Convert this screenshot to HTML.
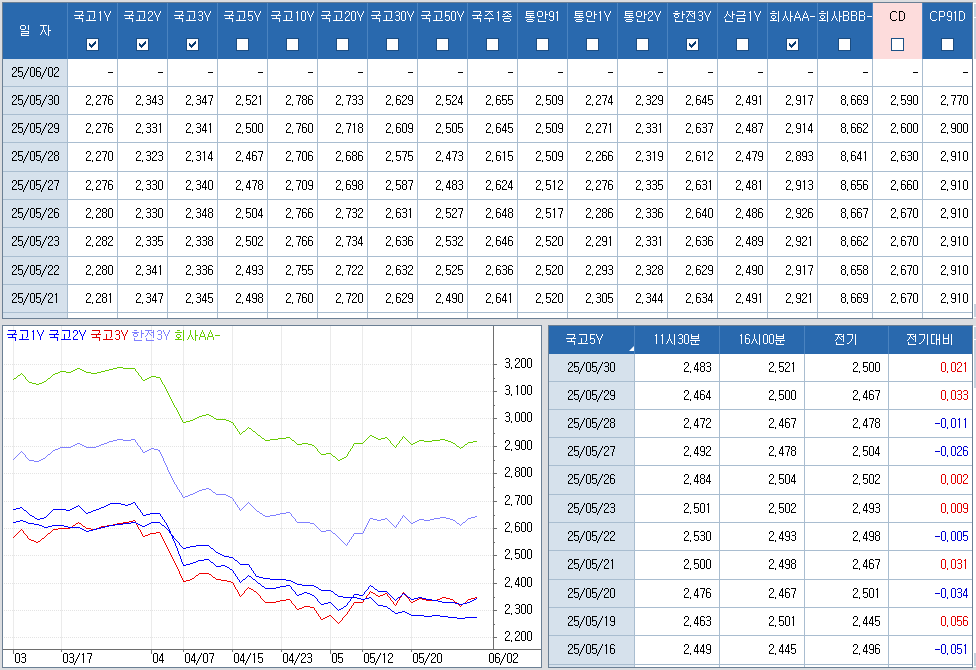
<!DOCTYPE html><html><head><meta charset="utf-8"><style>
html,body{margin:0;padding:0}
body{width:976px;height:670px;overflow:hidden;position:relative;background:#dcdde0;font-family:"Liberation Sans", sans-serif;font-size:13px;color:#000}
div{position:absolute;box-sizing:border-box}
.t{white-space:nowrap;line-height:14px;height:14px}
.n{white-space:nowrap;line-height:14px;height:14px;font-size:14px;text-align:right}
.nc{white-space:nowrap;line-height:14px;height:14px;font-size:14px;text-align:center}
.c{text-align:center}
.hl{height:1px;background:#a9bdd0}
.vl{width:1px;background:#a9bdd0}
.dash{height:1px;width:5px;background:#000}
.k{white-space:nowrap;line-height:14px;height:14px;font-size:12px}
.cb{width:13px;height:13px;border:1px solid #1b4c80;background:#fff}

</style></head><body>
<div style="left:2px;top:2px;width:971px;height:317px;border:1px solid #6b7f94;border-right:none;background:#fff"></div>
<div style="left:3px;top:3px;width:969px;height:56px;background:#2969ae"></div>
<div style="left:3px;top:59px;width:64px;height:259px;background:#d6e1ec"></div>
<div style="left:873px;top:3px;width:49px;height:56px;background:#fddcdc"></div>
<div style="left:67px;top:3px;width:1px;height:56px;background:#4a83c0"></div>
<div class="vl" style="left:67px;top:59px;height:259px"></div>
<div style="left:117px;top:3px;width:1px;height:56px;background:#4a83c0"></div>
<div class="vl" style="left:117px;top:59px;height:259px"></div>
<div style="left:167px;top:3px;width:1px;height:56px;background:#4a83c0"></div>
<div class="vl" style="left:167px;top:59px;height:259px"></div>
<div style="left:217px;top:3px;width:1px;height:56px;background:#4a83c0"></div>
<div class="vl" style="left:217px;top:59px;height:259px"></div>
<div style="left:267px;top:3px;width:1px;height:56px;background:#4a83c0"></div>
<div class="vl" style="left:267px;top:59px;height:259px"></div>
<div style="left:317px;top:3px;width:1px;height:56px;background:#4a83c0"></div>
<div class="vl" style="left:317px;top:59px;height:259px"></div>
<div style="left:367px;top:3px;width:1px;height:56px;background:#4a83c0"></div>
<div class="vl" style="left:367px;top:59px;height:259px"></div>
<div style="left:417px;top:3px;width:1px;height:56px;background:#4a83c0"></div>
<div class="vl" style="left:417px;top:59px;height:259px"></div>
<div style="left:467px;top:3px;width:1px;height:56px;background:#4a83c0"></div>
<div class="vl" style="left:467px;top:59px;height:259px"></div>
<div style="left:517px;top:3px;width:1px;height:56px;background:#4a83c0"></div>
<div class="vl" style="left:517px;top:59px;height:259px"></div>
<div style="left:567px;top:3px;width:1px;height:56px;background:#4a83c0"></div>
<div class="vl" style="left:567px;top:59px;height:259px"></div>
<div style="left:617px;top:3px;width:1px;height:56px;background:#4a83c0"></div>
<div class="vl" style="left:617px;top:59px;height:259px"></div>
<div style="left:667px;top:3px;width:1px;height:56px;background:#4a83c0"></div>
<div class="vl" style="left:667px;top:59px;height:259px"></div>
<div style="left:717px;top:3px;width:1px;height:56px;background:#4a83c0"></div>
<div class="vl" style="left:717px;top:59px;height:259px"></div>
<div style="left:767px;top:3px;width:1px;height:56px;background:#4a83c0"></div>
<div class="vl" style="left:767px;top:59px;height:259px"></div>
<div style="left:817px;top:3px;width:1px;height:56px;background:#4a83c0"></div>
<div class="vl" style="left:817px;top:59px;height:259px"></div>
<div style="left:872px;top:3px;width:1px;height:56px;background:#4a83c0"></div>
<div class="vl" style="left:872px;top:59px;height:259px"></div>
<div style="left:922px;top:3px;width:1px;height:56px;background:#4a83c0"></div>
<div class="vl" style="left:922px;top:59px;height:259px"></div>
<div class="hl" style="left:3px;top:86px;width:969px"></div>
<div class="hl" style="left:3px;top:114px;width:969px"></div>
<div class="hl" style="left:3px;top:142px;width:969px"></div>
<div class="hl" style="left:3px;top:171px;width:969px"></div>
<div class="hl" style="left:3px;top:199px;width:969px"></div>
<div class="hl" style="left:3px;top:227px;width:969px"></div>
<div class="hl" style="left:3px;top:256px;width:969px"></div>
<div class="hl" style="left:3px;top:284px;width:969px"></div>
<div class="hl" style="left:3px;top:312px;width:969px"></div>
<div class="cb" style="left:86px;top:38px;"></div>
<svg style="position:absolute;left:86px;top:38px" width="13" height="13" shape-rendering="crispEdges"><path d="M3 5h1v3h-1zM4 6h1v3h-1zM5 7h1v3h-1zM6 6h1v3h-1zM7 5h1v3h-1zM8 4h1v3h-1zM9 3h1v3h-1z" fill="#0b3b70"/></svg>
<div class="cb" style="left:136px;top:38px;"></div>
<svg style="position:absolute;left:136px;top:38px" width="13" height="13" shape-rendering="crispEdges"><path d="M3 5h1v3h-1zM4 6h1v3h-1zM5 7h1v3h-1zM6 6h1v3h-1zM7 5h1v3h-1zM8 4h1v3h-1zM9 3h1v3h-1z" fill="#0b3b70"/></svg>
<div class="cb" style="left:186px;top:38px;"></div>
<svg style="position:absolute;left:186px;top:38px" width="13" height="13" shape-rendering="crispEdges"><path d="M3 5h1v3h-1zM4 6h1v3h-1zM5 7h1v3h-1zM6 6h1v3h-1zM7 5h1v3h-1zM8 4h1v3h-1zM9 3h1v3h-1z" fill="#0b3b70"/></svg>
<div class="cb" style="left:236px;top:38px;"></div>
<div class="cb" style="left:286px;top:38px;"></div>
<div class="cb" style="left:336px;top:38px;"></div>
<div class="cb" style="left:386px;top:38px;"></div>
<div class="cb" style="left:436px;top:38px;"></div>
<div class="cb" style="left:486px;top:38px;"></div>
<div class="cb" style="left:536px;top:38px;"></div>
<div class="cb" style="left:586px;top:38px;"></div>
<div class="cb" style="left:636px;top:38px;"></div>
<div class="cb" style="left:686px;top:38px;"></div>
<svg style="position:absolute;left:686px;top:38px" width="13" height="13" shape-rendering="crispEdges"><path d="M3 5h1v3h-1zM4 6h1v3h-1zM5 7h1v3h-1zM6 6h1v3h-1zM7 5h1v3h-1zM8 4h1v3h-1zM9 3h1v3h-1z" fill="#0b3b70"/></svg>
<div class="cb" style="left:736px;top:38px;"></div>
<div class="cb" style="left:786px;top:38px;"></div>
<svg style="position:absolute;left:786px;top:38px" width="13" height="13" shape-rendering="crispEdges"><path d="M3 5h1v3h-1zM4 6h1v3h-1zM5 7h1v3h-1zM6 6h1v3h-1zM7 5h1v3h-1zM8 4h1v3h-1zM9 3h1v3h-1z" fill="#0b3b70"/></svg>
<div class="cb" style="left:838px;top:38px;"></div>
<div class="cb" style="left:891px;top:38px;border-color:#1c5185"></div>
<div class="cb" style="left:941px;top:38px;"></div>
<div style="left:972px;top:2px;width:1px;height:317px;background:#6b7f94"></div>
<div style="left:973px;top:3px;width:3px;height:315px;background:#fff"></div>
<div style="left:974px;top:4px;width:2px;height:55px;background:#c8d3df"></div>
<div style="left:974px;top:17px;width:2px;height:1px;background:#fff"></div>
<div style="left:974px;top:304px;width:2px;height:13px;background:#c8d3df"></div>
<div style="left:548px;top:325px;width:425px;height:343px;border:1px solid #6b7f94;border-right:none;background:#fff"></div>
<div style="left:549px;top:326px;width:423px;height:28px;background:#2969ae"></div>
<div style="left:549px;top:354px;width:85px;height:313px;background:#d6e1ec"></div>
<div style="left:634px;top:326px;width:1px;height:28px;background:#4a83c0"></div>
<div class="vl" style="left:634px;top:354px;height:313px"></div>
<div style="left:719px;top:326px;width:1px;height:28px;background:#4a83c0"></div>
<div class="vl" style="left:719px;top:354px;height:313px"></div>
<div style="left:804px;top:326px;width:1px;height:28px;background:#4a83c0"></div>
<div class="vl" style="left:804px;top:354px;height:313px"></div>
<div style="left:888px;top:326px;width:1px;height:28px;background:#4a83c0"></div>
<div class="vl" style="left:888px;top:354px;height:313px"></div>
<div class="hl" style="left:549px;top:381px;width:423px"></div>
<div class="hl" style="left:549px;top:409px;width:423px"></div>
<div class="hl" style="left:549px;top:437px;width:423px"></div>
<div class="hl" style="left:549px;top:465px;width:423px"></div>
<div class="hl" style="left:549px;top:494px;width:423px"></div>
<div class="hl" style="left:549px;top:522px;width:423px"></div>
<div class="hl" style="left:549px;top:550px;width:423px"></div>
<div class="hl" style="left:549px;top:579px;width:423px"></div>
<div class="hl" style="left:549px;top:607px;width:423px"></div>
<div class="hl" style="left:549px;top:635px;width:423px"></div>
<div class="hl" style="left:549px;top:664px;width:423px"></div>
<svg style="position:absolute;left:629px;top:346px" width="5" height="5"><path d="M5 0 L5 5 L0 5 Z" fill="#fff"/></svg>
<div style="left:972px;top:325px;width:1px;height:343px;background:#6b7f94"></div>
<div style="left:973px;top:326px;width:3px;height:341px;background:#fff"></div>
<div style="left:974px;top:327px;width:2px;height:61px;background:#c8d3df"></div>
<div style="left:974px;top:339px;width:2px;height:1px;background:#fff"></div>
<div style="left:974px;top:653px;width:2px;height:13px;background:#c8d3df"></div>
<div style="left:2px;top:325px;width:540px;height:343px;border:1px solid #6b7f94;background:#fff"></div>
<svg style="position:absolute;left:0;top:0" width="976" height="670">
<line x1="13.5" y1="326" x2="13.5" y2="649" stroke="#ebebeb" stroke-width="1"/>
<line x1="61.5" y1="326" x2="61.5" y2="649" stroke="#ebebeb" stroke-width="1"/>
<line x1="151.5" y1="326" x2="151.5" y2="649" stroke="#ebebeb" stroke-width="1"/>
<line x1="183.5" y1="326" x2="183.5" y2="649" stroke="#ebebeb" stroke-width="1"/>
<line x1="232.5" y1="326" x2="232.5" y2="649" stroke="#ebebeb" stroke-width="1"/>
<line x1="281.5" y1="326" x2="281.5" y2="649" stroke="#ebebeb" stroke-width="1"/>
<line x1="330.5" y1="326" x2="330.5" y2="649" stroke="#ebebeb" stroke-width="1"/>
<line x1="362.5" y1="326" x2="362.5" y2="649" stroke="#ebebeb" stroke-width="1"/>
<line x1="411.5" y1="326" x2="411.5" y2="649" stroke="#ebebeb" stroke-width="1"/>
<line x1="4" y1="364.5" x2="493" y2="364.5" stroke="#e4e4e4" stroke-width="1" stroke-dasharray="1 1"/>
<line x1="4" y1="391.5" x2="493" y2="391.5" stroke="#e4e4e4" stroke-width="1" stroke-dasharray="1 1"/>
<line x1="4" y1="418.5" x2="493" y2="418.5" stroke="#e4e4e4" stroke-width="1" stroke-dasharray="1 1"/>
<line x1="4" y1="446.5" x2="493" y2="446.5" stroke="#e4e4e4" stroke-width="1" stroke-dasharray="1 1"/>
<line x1="4" y1="473.5" x2="493" y2="473.5" stroke="#e4e4e4" stroke-width="1" stroke-dasharray="1 1"/>
<line x1="4" y1="501.5" x2="493" y2="501.5" stroke="#e4e4e4" stroke-width="1" stroke-dasharray="1 1"/>
<line x1="4" y1="528.5" x2="493" y2="528.5" stroke="#e4e4e4" stroke-width="1" stroke-dasharray="1 1"/>
<line x1="4" y1="555.5" x2="493" y2="555.5" stroke="#e4e4e4" stroke-width="1" stroke-dasharray="1 1"/>
<line x1="4" y1="583.5" x2="493" y2="583.5" stroke="#e4e4e4" stroke-width="1" stroke-dasharray="1 1"/>
<line x1="4" y1="610.5" x2="493" y2="610.5" stroke="#e4e4e4" stroke-width="1" stroke-dasharray="1 1"/>
<line x1="4" y1="637.5" x2="493" y2="637.5" stroke="#e4e4e4" stroke-width="1" stroke-dasharray="1 1"/>
<line x1="493.5" y1="326" x2="493.5" y2="650" stroke="#6e6e6e" stroke-width="1"/>
<line x1="3" y1="649.5" x2="541" y2="649.5" stroke="#6e6e6e" stroke-width="1"/>
<line x1="494" y1="364.5" x2="497" y2="364.5" stroke="#6e6e6e"/>
<line x1="494" y1="378.5" x2="495" y2="378.5" stroke="#6e6e6e"/>
<line x1="494" y1="391.5" x2="497" y2="391.5" stroke="#6e6e6e"/>
<line x1="494" y1="405.5" x2="495" y2="405.5" stroke="#6e6e6e"/>
<line x1="494" y1="418.5" x2="497" y2="418.5" stroke="#6e6e6e"/>
<line x1="494" y1="433.5" x2="495" y2="433.5" stroke="#6e6e6e"/>
<line x1="494" y1="446.5" x2="497" y2="446.5" stroke="#6e6e6e"/>
<line x1="494" y1="460.5" x2="495" y2="460.5" stroke="#6e6e6e"/>
<line x1="494" y1="473.5" x2="497" y2="473.5" stroke="#6e6e6e"/>
<line x1="494" y1="487.5" x2="495" y2="487.5" stroke="#6e6e6e"/>
<line x1="494" y1="501.5" x2="497" y2="501.5" stroke="#6e6e6e"/>
<line x1="494" y1="515.5" x2="495" y2="515.5" stroke="#6e6e6e"/>
<line x1="494" y1="528.5" x2="497" y2="528.5" stroke="#6e6e6e"/>
<line x1="494" y1="542.5" x2="495" y2="542.5" stroke="#6e6e6e"/>
<line x1="494" y1="555.5" x2="497" y2="555.5" stroke="#6e6e6e"/>
<line x1="494" y1="569.5" x2="495" y2="569.5" stroke="#6e6e6e"/>
<line x1="494" y1="583.5" x2="497" y2="583.5" stroke="#6e6e6e"/>
<line x1="494" y1="597.5" x2="495" y2="597.5" stroke="#6e6e6e"/>
<line x1="494" y1="610.5" x2="497" y2="610.5" stroke="#6e6e6e"/>
<line x1="494" y1="624.5" x2="495" y2="624.5" stroke="#6e6e6e"/>
<line x1="494" y1="637.5" x2="497" y2="637.5" stroke="#6e6e6e"/>
<line x1="13.5" y1="650" x2="13.5" y2="654" stroke="#6e6e6e"/>
<line x1="61.5" y1="650" x2="61.5" y2="652" stroke="#6e6e6e"/>
<line x1="151.5" y1="650" x2="151.5" y2="654" stroke="#6e6e6e"/>
<line x1="183.5" y1="650" x2="183.5" y2="652" stroke="#6e6e6e"/>
<line x1="232.5" y1="650" x2="232.5" y2="652" stroke="#6e6e6e"/>
<line x1="281.5" y1="650" x2="281.5" y2="652" stroke="#6e6e6e"/>
<line x1="330.5" y1="650" x2="330.5" y2="654" stroke="#6e6e6e"/>
<line x1="362.5" y1="650" x2="362.5" y2="652" stroke="#6e6e6e"/>
<line x1="411.5" y1="650" x2="411.5" y2="652" stroke="#6e6e6e"/>
<path d="M117 439h6v1h-6zM131 439h4v1h-4zM113 440h4v1h-4zM123 440h8v1h-8zM135 440h1v1h-1zM109 441h4v1h-4zM135 441h1v1h-1zM107 442h2v1h-2zM136 442h1v1h-1zM77 443h3v1h-3zM104 443h3v1h-3zM137 443h1v1h-1zM75 444h2v1h-2zM80 444h2v1h-2zM101 444h3v1h-3zM137 444h1v1h-1zM73 445h2v1h-2zM82 445h2v1h-2zM99 445h2v1h-2zM138 445h1v1h-1zM71 446h2v1h-2zM84 446h2v1h-2zM96 446h3v1h-3zM139 446h1v1h-1zM60 447h11v1h-11zM86 447h10v1h-10zM140 447h1v1h-1zM58 448h2v1h-2zM140 448h1v1h-1zM151 448h3v1h-3zM55 449h3v1h-3zM141 449h1v1h-1zM149 449h2v1h-2zM154 449h4v1h-4zM53 450h2v1h-2zM142 450h1v1h-1zM147 450h2v1h-2zM158 450h2v1h-2zM21 451h1v1h-1zM52 451h1v1h-1zM142 451h1v1h-1zM145 451h2v1h-2zM159 451h1v1h-1zM20 452h1v1h-1zM22 452h1v1h-1zM51 452h1v1h-1zM143 452h2v1h-2zM160 452h1v1h-1zM19 453h1v1h-1zM23 453h1v1h-1zM50 453h1v1h-1zM160 453h1v1h-1zM18 454h1v1h-1zM24 454h1v1h-1zM48 454h2v1h-2zM161 454h1v1h-1zM17 455h1v1h-1zM25 455h1v1h-1zM47 455h1v1h-1zM161 455h1v1h-1zM16 456h1v1h-1zM25 456h1v1h-1zM46 456h1v1h-1zM162 456h1v1h-1zM15 457h1v1h-1zM26 457h1v1h-1zM45 457h1v1h-1zM162 457h1v1h-1zM14 458h1v1h-1zM27 458h1v1h-1zM43 458h2v1h-2zM163 458h1v1h-1zM13 459h1v1h-1zM28 459h1v1h-1zM41 459h2v1h-2zM163 459h1v1h-1zM29 460h5v1h-5zM39 460h2v1h-2zM163 460h1v1h-1zM34 461h5v1h-5zM164 461h1v1h-1zM164 462h1v1h-1zM165 463h1v1h-1zM165 464h1v1h-1zM166 465h1v1h-1zM166 466h1v1h-1zM167 467h1v1h-1zM167 468h1v1h-1zM167 469h1v1h-1zM168 470h1v1h-1zM168 471h1v1h-1zM169 472h1v1h-1zM169 473h1v1h-1zM170 474h1v1h-1zM170 475h1v1h-1zM171 476h1v1h-1zM171 477h1v1h-1zM172 478h1v1h-1zM172 479h1v1h-1zM173 480h1v1h-1zM173 481h1v1h-1zM174 482h1v1h-1zM174 483h1v1h-1zM175 484h1v1h-1zM176 485h1v1h-1zM176 486h1v1h-1zM177 487h1v1h-1zM177 488h1v1h-1zM206 488h3v1h-3zM178 489h1v1h-1zM202 489h4v1h-4zM209 489h2v1h-2zM179 490h1v1h-1zM199 490h3v1h-3zM211 490h1v1h-1zM179 491h1v1h-1zM197 491h2v1h-2zM212 491h1v1h-1zM180 492h1v1h-1zM195 492h2v1h-2zM213 492h2v1h-2zM181 493h1v1h-1zM193 493h2v1h-2zM215 493h1v1h-1zM181 494h1v1h-1zM190 494h3v1h-3zM216 494h10v1h-10zM182 495h1v1h-1zM188 495h2v1h-2zM226 495h2v1h-2zM182 496h1v1h-1zM185 496h3v1h-3zM228 496h2v1h-2zM183 497h2v1h-2zM230 497h2v1h-2zM232 498h1v1h-1zM233 499h1v1h-1zM233 500h1v1h-1zM234 501h1v1h-1zM235 502h1v1h-1zM248 502h1v1h-1zM235 503h1v1h-1zM247 503h1v1h-1zM249 503h1v1h-1zM236 504h1v1h-1zM246 504h1v1h-1zM250 504h1v1h-1zM237 505h1v1h-1zM245 505h1v1h-1zM251 505h1v1h-1zM237 506h1v1h-1zM244 506h1v1h-1zM252 506h1v1h-1zM238 507h1v1h-1zM243 507h1v1h-1zM253 507h1v1h-1zM239 508h1v1h-1zM242 508h1v1h-1zM254 508h1v1h-1zM239 509h1v1h-1zM241 509h1v1h-1zM255 509h1v1h-1zM240 510h1v1h-1zM256 510h1v1h-1zM257 511h2v1h-2zM259 512h1v1h-1zM286 512h4v1h-4zM260 513h2v1h-2zM280 513h6v1h-6zM290 513h1v1h-1zM262 514h1v1h-1zM276 514h4v1h-4zM291 514h1v1h-1zM263 515h2v1h-2zM270 515h6v1h-6zM291 515h1v1h-1zM403 515h1v1h-1zM265 516h5v1h-5zM292 516h1v1h-1zM402 516h1v1h-1zM404 516h1v1h-1zM475 516h2v1h-2zM293 517h1v1h-1zM402 517h1v1h-1zM405 517h1v1h-1zM440 517h6v1h-6zM471 517h4v1h-4zM294 518h1v1h-1zM370 518h3v1h-3zM385 518h2v1h-2zM401 518h1v1h-1zM406 518h1v1h-1zM434 518h6v1h-6zM446 518h4v1h-4zM468 518h3v1h-3zM295 519h1v1h-1zM369 519h1v1h-1zM373 519h4v1h-4zM381 519h4v1h-4zM387 519h1v1h-1zM400 519h1v1h-1zM407 519h1v1h-1zM419 519h5v1h-5zM430 519h4v1h-4zM450 519h3v1h-3zM467 519h1v1h-1zM295 520h1v1h-1zM369 520h1v1h-1zM377 520h4v1h-4zM388 520h1v1h-1zM400 520h1v1h-1zM408 520h1v1h-1zM417 520h2v1h-2zM424 520h6v1h-6zM453 520h2v1h-2zM466 520h1v1h-1zM296 521h1v1h-1zM368 521h1v1h-1zM389 521h1v1h-1zM399 521h1v1h-1zM409 521h1v1h-1zM415 521h2v1h-2zM455 521h1v1h-1zM465 521h1v1h-1zM297 522h13v1h-13zM368 522h1v1h-1zM390 522h1v1h-1zM398 522h1v1h-1zM410 522h1v1h-1zM413 522h2v1h-2zM456 522h1v1h-1zM463 522h2v1h-2zM310 523h4v1h-4zM367 523h1v1h-1zM391 523h1v1h-1zM398 523h1v1h-1zM411 523h2v1h-2zM457 523h2v1h-2zM462 523h1v1h-1zM314 524h1v1h-1zM367 524h1v1h-1zM392 524h1v1h-1zM397 524h1v1h-1zM459 524h1v1h-1zM461 524h1v1h-1zM315 525h1v1h-1zM366 525h1v1h-1zM393 525h1v1h-1zM396 525h1v1h-1zM460 525h1v1h-1zM316 526h1v1h-1zM366 526h1v1h-1zM394 526h1v1h-1zM396 526h1v1h-1zM317 527h1v1h-1zM365 527h1v1h-1zM395 527h1v1h-1zM318 528h1v1h-1zM365 528h1v1h-1zM319 529h1v1h-1zM364 529h1v1h-1zM320 530h1v1h-1zM326 530h5v1h-5zM364 530h1v1h-1zM321 531h5v1h-5zM331 531h1v1h-1zM363 531h1v1h-1zM332 532h1v1h-1zM363 532h1v1h-1zM333 533h2v1h-2zM354 533h9v1h-9zM335 534h1v1h-1zM353 534h1v1h-1zM336 535h1v1h-1zM353 535h1v1h-1zM337 536h1v1h-1zM352 536h1v1h-1zM338 537h1v1h-1zM351 537h1v1h-1zM339 538h1v1h-1zM351 538h1v1h-1zM340 539h1v1h-1zM350 539h1v1h-1zM341 540h1v1h-1zM349 540h1v1h-1zM342 541h1v1h-1zM349 541h1v1h-1zM343 542h1v1h-1zM348 542h1v1h-1zM344 543h1v1h-1zM347 543h1v1h-1zM345 544h1v1h-1zM347 544h1v1h-1zM346 545h1v1h-1z" fill="#8080ff" shape-rendering="crispEdges"/>
<path d="M117 367h6v1h-6zM77 368h3v1h-3zM113 368h4v1h-4zM123 368h12v1h-12zM75 369h2v1h-2zM80 369h2v1h-2zM109 369h4v1h-4zM135 369h1v1h-1zM73 370h2v1h-2zM82 370h2v1h-2zM105 370h4v1h-4zM135 370h1v1h-1zM60 371h6v1h-6zM71 371h2v1h-2zM84 371h2v1h-2zM101 371h4v1h-4zM136 371h1v1h-1zM58 372h2v1h-2zM66 372h5v1h-5zM86 372h5v1h-5zM97 372h4v1h-4zM137 372h1v1h-1zM21 373h1v1h-1zM55 373h3v1h-3zM91 373h6v1h-6zM138 373h1v1h-1zM20 374h1v1h-1zM22 374h1v1h-1zM53 374h2v1h-2zM138 374h1v1h-1zM18 375h2v1h-2zM23 375h1v1h-1zM52 375h1v1h-1zM139 375h1v1h-1zM17 376h1v1h-1zM24 376h1v1h-1zM51 376h1v1h-1zM140 376h1v1h-1zM151 376h5v1h-5zM16 377h1v1h-1zM25 377h1v1h-1zM50 377h1v1h-1zM141 377h1v1h-1zM149 377h2v1h-2zM156 377h4v1h-4zM14 378h2v1h-2zM25 378h1v1h-1zM48 378h2v1h-2zM141 378h1v1h-1zM147 378h2v1h-2zM160 378h1v1h-1zM13 379h1v1h-1zM26 379h1v1h-1zM47 379h1v1h-1zM142 379h1v1h-1zM145 379h2v1h-2zM160 379h1v1h-1zM27 380h1v1h-1zM46 380h1v1h-1zM143 380h2v1h-2zM161 380h1v1h-1zM28 381h1v1h-1zM44 381h2v1h-2zM161 381h1v1h-1zM29 382h3v1h-3zM42 382h2v1h-2zM162 382h1v1h-1zM32 383h4v1h-4zM39 383h3v1h-3zM162 383h1v1h-1zM36 384h3v1h-3zM163 384h1v1h-1zM164 385h1v1h-1zM164 386h1v1h-1zM165 387h1v1h-1zM165 388h1v1h-1zM166 389h1v1h-1zM166 390h1v1h-1zM167 391h1v1h-1zM167 392h1v1h-1zM168 393h1v1h-1zM168 394h1v1h-1zM169 395h1v1h-1zM169 396h1v1h-1zM170 397h1v1h-1zM170 398h1v1h-1zM171 399h1v1h-1zM171 400h1v1h-1zM172 401h1v1h-1zM172 402h1v1h-1zM173 403h1v1h-1zM173 404h1v1h-1zM174 405h1v1h-1zM174 406h1v1h-1zM175 407h1v1h-1zM176 408h1v1h-1zM176 409h1v1h-1zM177 410h1v1h-1zM177 411h1v1h-1zM178 412h1v1h-1zM178 413h1v1h-1zM179 414h1v1h-1zM206 414h3v1h-3zM179 415h1v1h-1zM202 415h4v1h-4zM209 415h2v1h-2zM180 416h1v1h-1zM199 416h3v1h-3zM211 416h2v1h-2zM180 417h1v1h-1zM197 417h2v1h-2zM213 417h1v1h-1zM181 418h1v1h-1zM195 418h2v1h-2zM214 418h2v1h-2zM181 419h1v1h-1zM193 419h2v1h-2zM216 419h10v1h-10zM182 420h1v1h-1zM190 420h3v1h-3zM226 420h3v1h-3zM182 421h1v1h-1zM186 421h4v1h-4zM229 421h2v1h-2zM183 422h3v1h-3zM231 422h2v1h-2zM233 423h1v1h-1zM233 424h1v1h-1zM234 425h1v1h-1zM235 426h1v1h-1zM235 427h1v1h-1zM248 427h1v1h-1zM236 428h1v1h-1zM247 428h1v1h-1zM249 428h2v1h-2zM237 429h1v1h-1zM246 429h1v1h-1zM251 429h1v1h-1zM237 430h1v1h-1zM245 430h1v1h-1zM252 430h1v1h-1zM238 431h1v1h-1zM243 431h2v1h-2zM253 431h2v1h-2zM239 432h1v1h-1zM242 432h1v1h-1zM255 432h1v1h-1zM239 433h1v1h-1zM241 433h1v1h-1zM256 433h1v1h-1zM240 434h1v1h-1zM257 434h1v1h-1zM258 435h2v1h-2zM370 435h2v1h-2zM260 436h1v1h-1zM369 436h1v1h-1zM372 436h2v1h-2zM403 436h1v1h-1zM261 437h1v1h-1zM286 437h4v1h-4zM368 437h1v1h-1zM374 437h2v1h-2zM385 437h2v1h-2zM402 437h1v1h-1zM404 437h1v1h-1zM262 438h2v1h-2zM278 438h8v1h-8zM290 438h1v1h-1zM367 438h1v1h-1zM376 438h2v1h-2zM381 438h4v1h-4zM387 438h1v1h-1zM402 438h1v1h-1zM405 438h1v1h-1zM264 439h1v1h-1zM270 439h8v1h-8zM291 439h1v1h-1zM366 439h1v1h-1zM378 439h3v1h-3zM388 439h1v1h-1zM401 439h1v1h-1zM406 439h1v1h-1zM440 439h5v1h-5zM265 440h5v1h-5zM292 440h2v1h-2zM365 440h1v1h-1zM389 440h1v1h-1zM400 440h1v1h-1zM407 440h1v1h-1zM419 440h5v1h-5zM432 440h8v1h-8zM445 440h3v1h-3zM294 441h1v1h-1zM364 441h1v1h-1zM390 441h1v1h-1zM399 441h1v1h-1zM408 441h1v1h-1zM417 441h2v1h-2zM424 441h8v1h-8zM448 441h3v1h-3zM473 441h4v1h-4zM295 442h1v1h-1zM363 442h1v1h-1zM390 442h1v1h-1zM399 442h1v1h-1zM409 442h1v1h-1zM415 442h2v1h-2zM451 442h2v1h-2zM468 442h5v1h-5zM296 443h1v1h-1zM302 443h6v1h-6zM354 443h9v1h-9zM391 443h1v1h-1zM398 443h1v1h-1zM410 443h1v1h-1zM413 443h2v1h-2zM453 443h2v1h-2zM467 443h1v1h-1zM297 444h5v1h-5zM308 444h4v1h-4zM353 444h1v1h-1zM392 444h1v1h-1zM397 444h1v1h-1zM411 444h2v1h-2zM455 444h1v1h-1zM465 444h2v1h-2zM312 445h2v1h-2zM353 445h1v1h-1zM393 445h1v1h-1zM396 445h1v1h-1zM456 445h1v1h-1zM464 445h1v1h-1zM314 446h1v1h-1zM352 446h1v1h-1zM394 446h1v1h-1zM396 446h1v1h-1zM457 446h2v1h-2zM463 446h1v1h-1zM315 447h1v1h-1zM352 447h1v1h-1zM395 447h1v1h-1zM459 447h1v1h-1zM461 447h2v1h-2zM316 448h1v1h-1zM351 448h1v1h-1zM460 448h1v1h-1zM317 449h1v1h-1zM350 449h1v1h-1zM317 450h1v1h-1zM350 450h1v1h-1zM318 451h1v1h-1zM349 451h1v1h-1zM319 452h1v1h-1zM348 452h1v1h-1zM320 453h1v1h-1zM326 453h5v1h-5zM348 453h1v1h-1zM321 454h5v1h-5zM331 454h1v1h-1zM347 454h1v1h-1zM332 455h1v1h-1zM347 455h1v1h-1zM333 456h2v1h-2zM346 456h1v1h-1zM335 457h1v1h-1zM344 457h2v1h-2zM336 458h1v1h-1zM342 458h2v1h-2zM337 459h1v1h-1zM340 459h2v1h-2zM338 460h2v1h-2z" fill="#66cc00" shape-rendering="crispEdges"/>
<path d="M133 520h2v1h-2zM129 521h4v1h-4zM135 521h1v1h-1zM78 522h1v1h-1zM123 522h6v1h-6zM135 522h1v1h-1zM76 523h2v1h-2zM79 523h2v1h-2zM117 523h6v1h-6zM136 523h1v1h-1zM75 524h1v1h-1zM81 524h1v1h-1zM113 524h4v1h-4zM136 524h1v1h-1zM73 525h2v1h-2zM82 525h1v1h-1zM107 525h6v1h-6zM137 525h1v1h-1zM72 526h1v1h-1zM83 526h2v1h-2zM101 526h6v1h-6zM137 526h1v1h-1zM70 527h2v1h-2zM85 527h1v1h-1zM99 527h2v1h-2zM138 527h1v1h-1zM58 528h12v1h-12zM86 528h5v1h-5zM96 528h3v1h-3zM138 528h1v1h-1zM21 529h1v1h-1zM53 529h5v1h-5zM91 529h5v1h-5zM139 529h1v1h-1zM20 530h1v1h-1zM22 530h1v1h-1zM52 530h1v1h-1zM140 530h1v1h-1zM19 531h1v1h-1zM23 531h1v1h-1zM51 531h1v1h-1zM140 531h1v1h-1zM18 532h1v1h-1zM23 532h1v1h-1zM50 532h1v1h-1zM141 532h1v1h-1zM156 532h4v1h-4zM17 533h1v1h-1zM24 533h1v1h-1zM48 533h2v1h-2zM141 533h1v1h-1zM150 533h6v1h-6zM160 533h1v1h-1zM16 534h1v1h-1zM25 534h1v1h-1zM47 534h1v1h-1zM142 534h1v1h-1zM148 534h2v1h-2zM160 534h1v1h-1zM15 535h1v1h-1zM26 535h1v1h-1zM46 535h1v1h-1zM142 535h1v1h-1zM145 535h3v1h-3zM161 535h1v1h-1zM14 536h1v1h-1zM27 536h1v1h-1zM45 536h1v1h-1zM143 536h2v1h-2zM161 536h1v1h-1zM13 537h1v1h-1zM27 537h1v1h-1zM44 537h1v1h-1zM162 537h1v1h-1zM28 538h1v1h-1zM42 538h2v1h-2zM162 538h1v1h-1zM29 539h2v1h-2zM41 539h1v1h-1zM163 539h1v1h-1zM31 540h3v1h-3zM40 540h1v1h-1zM163 540h1v1h-1zM34 541h2v1h-2zM38 541h2v1h-2zM164 541h1v1h-1zM36 542h2v1h-2zM164 542h1v1h-1zM165 543h1v1h-1zM165 544h1v1h-1zM166 545h1v1h-1zM166 546h1v1h-1zM167 547h1v1h-1zM167 548h1v1h-1zM168 549h1v1h-1zM168 550h1v1h-1zM169 551h1v1h-1zM169 552h1v1h-1zM170 553h1v1h-1zM170 554h1v1h-1zM171 555h1v1h-1zM171 556h1v1h-1zM172 557h1v1h-1zM172 558h1v1h-1zM173 559h1v1h-1zM173 560h1v1h-1zM174 561h1v1h-1zM174 562h1v1h-1zM175 563h1v1h-1zM175 564h1v1h-1zM176 565h1v1h-1zM176 566h1v1h-1zM177 567h1v1h-1zM177 568h1v1h-1zM178 569h1v1h-1zM178 570h1v1h-1zM179 571h1v1h-1zM179 572h1v1h-1zM179 573h1v1h-1zM199 573h10v1h-10zM180 574h1v1h-1zM198 574h1v1h-1zM209 574h2v1h-2zM180 575h1v1h-1zM196 575h2v1h-2zM211 575h1v1h-1zM181 576h1v1h-1zM195 576h1v1h-1zM212 576h1v1h-1zM181 577h1v1h-1zM194 577h1v1h-1zM213 577h2v1h-2zM182 578h1v1h-1zM192 578h2v1h-2zM215 578h1v1h-1zM182 579h1v1h-1zM190 579h2v1h-2zM216 579h5v1h-5zM183 580h1v1h-1zM186 580h4v1h-4zM221 580h6v1h-6zM183 581h3v1h-3zM227 581h4v1h-4zM231 582h2v1h-2zM233 583h1v1h-1zM233 584h1v1h-1zM234 585h1v1h-1zM234 586h1v1h-1zM235 587h1v1h-1zM248 587h1v1h-1zM235 588h1v1h-1zM247 588h1v1h-1zM249 588h2v1h-2zM236 589h1v1h-1zM246 589h1v1h-1zM251 589h2v1h-2zM237 590h1v1h-1zM245 590h1v1h-1zM253 590h1v1h-1zM237 591h1v1h-1zM244 591h1v1h-1zM254 591h2v1h-2zM370 591h1v1h-1zM238 592h1v1h-1zM244 592h1v1h-1zM256 592h1v1h-1zM369 592h1v1h-1zM371 592h2v1h-2zM403 592h1v1h-1zM238 593h1v1h-1zM243 593h1v1h-1zM257 593h1v1h-1zM369 593h1v1h-1zM373 593h2v1h-2zM385 593h2v1h-2zM402 593h1v1h-1zM404 593h1v1h-1zM239 594h1v1h-1zM242 594h1v1h-1zM258 594h1v1h-1zM368 594h1v1h-1zM375 594h1v1h-1zM383 594h2v1h-2zM387 594h1v1h-1zM402 594h1v1h-1zM405 594h1v1h-1zM239 595h1v1h-1zM241 595h1v1h-1zM259 595h1v1h-1zM367 595h1v1h-1zM376 595h2v1h-2zM380 595h3v1h-3zM387 595h1v1h-1zM401 595h1v1h-1zM405 595h1v1h-1zM240 596h1v1h-1zM260 596h1v1h-1zM366 596h1v1h-1zM378 596h2v1h-2zM388 596h1v1h-1zM401 596h1v1h-1zM406 596h1v1h-1zM260 597h1v1h-1zM366 597h1v1h-1zM389 597h1v1h-1zM400 597h1v1h-1zM407 597h1v1h-1zM442 597h4v1h-4zM475 597h2v1h-2zM261 598h1v1h-1zM365 598h1v1h-1zM390 598h1v1h-1zM399 598h1v1h-1zM408 598h1v1h-1zM419 598h3v1h-3zM440 598h2v1h-2zM446 598h4v1h-4zM471 598h4v1h-4zM262 599h1v1h-1zM286 599h4v1h-4zM364 599h1v1h-1zM390 599h1v1h-1zM399 599h1v1h-1zM409 599h1v1h-1zM417 599h2v1h-2zM422 599h4v1h-4zM437 599h3v1h-3zM450 599h3v1h-3zM468 599h3v1h-3zM263 600h1v1h-1zM280 600h6v1h-6zM290 600h1v1h-1zM363 600h1v1h-1zM391 600h1v1h-1zM398 600h1v1h-1zM409 600h1v1h-1zM415 600h2v1h-2zM426 600h11v1h-11zM453 600h1v1h-1zM467 600h1v1h-1zM264 601h1v1h-1zM276 601h4v1h-4zM291 601h1v1h-1zM363 601h1v1h-1zM392 601h1v1h-1zM397 601h1v1h-1zM410 601h1v1h-1zM413 601h2v1h-2zM454 601h1v1h-1zM466 601h1v1h-1zM265 602h11v1h-11zM291 602h1v1h-1zM354 602h9v1h-9zM393 602h1v1h-1zM397 602h1v1h-1zM411 602h2v1h-2zM455 602h2v1h-2zM465 602h1v1h-1zM292 603h1v1h-1zM353 603h1v1h-1zM393 603h1v1h-1zM396 603h1v1h-1zM457 603h1v1h-1zM463 603h2v1h-2zM293 604h1v1h-1zM353 604h1v1h-1zM394 604h1v1h-1zM396 604h1v1h-1zM458 604h1v1h-1zM462 604h1v1h-1zM294 605h1v1h-1zM352 605h1v1h-1zM395 605h1v1h-1zM459 605h1v1h-1zM461 605h1v1h-1zM295 606h1v1h-1zM304 606h6v1h-6zM351 606h1v1h-1zM460 606h1v1h-1zM295 607h1v1h-1zM302 607h2v1h-2zM310 607h4v1h-4zM351 607h1v1h-1zM296 608h1v1h-1zM299 608h3v1h-3zM314 608h1v1h-1zM350 608h1v1h-1zM297 609h2v1h-2zM314 609h1v1h-1zM349 609h1v1h-1zM315 610h1v1h-1zM349 610h1v1h-1zM316 611h1v1h-1zM348 611h1v1h-1zM316 612h1v1h-1zM347 612h1v1h-1zM317 613h1v1h-1zM347 613h1v1h-1zM318 614h1v1h-1zM346 614h1v1h-1zM318 615h1v1h-1zM329 615h2v1h-2zM345 615h1v1h-1zM319 616h1v1h-1zM327 616h2v1h-2zM331 616h1v1h-1zM344 616h1v1h-1zM320 617h1v1h-1zM325 617h2v1h-2zM332 617h1v1h-1zM343 617h1v1h-1zM320 618h1v1h-1zM323 618h2v1h-2zM333 618h1v1h-1zM342 618h1v1h-1zM321 619h2v1h-2zM334 619h1v1h-1zM342 619h1v1h-1zM335 620h1v1h-1zM341 620h1v1h-1zM336 621h1v1h-1zM340 621h1v1h-1zM337 622h1v1h-1zM339 622h1v1h-1zM338 623h1v1h-1z" fill="#f00000" shape-rendering="crispEdges"/>
<path d="M133 502h2v1h-2zM110 503h11v1h-11zM131 503h2v1h-2zM135 503h1v1h-1zM108 504h2v1h-2zM121 504h4v1h-4zM128 504h3v1h-3zM135 504h1v1h-1zM78 505h1v1h-1zM106 505h2v1h-2zM125 505h3v1h-3zM136 505h1v1h-1zM76 506h2v1h-2zM79 506h1v1h-1zM104 506h2v1h-2zM137 506h1v1h-1zM20 507h2v1h-2zM74 507h2v1h-2zM80 507h1v1h-1zM101 507h3v1h-3zM137 507h1v1h-1zM16 508h4v1h-4zM22 508h1v1h-1zM72 508h2v1h-2zM81 508h1v1h-1zM99 508h2v1h-2zM138 508h1v1h-1zM13 509h3v1h-3zM23 509h1v1h-1zM53 509h13v1h-13zM70 509h2v1h-2zM82 509h1v1h-1zM96 509h3v1h-3zM139 509h1v1h-1zM24 510h2v1h-2zM52 510h1v1h-1zM66 510h4v1h-4zM83 510h1v1h-1zM93 510h3v1h-3zM140 510h1v1h-1zM26 511h1v1h-1zM51 511h1v1h-1zM84 511h1v1h-1zM91 511h2v1h-2zM140 511h1v1h-1zM27 512h1v1h-1zM50 512h1v1h-1zM85 512h1v1h-1zM88 512h3v1h-3zM141 512h1v1h-1zM28 513h1v1h-1zM49 513h1v1h-1zM86 513h2v1h-2zM142 513h1v1h-1zM150 513h10v1h-10zM29 514h1v1h-1zM48 514h1v1h-1zM142 514h1v1h-1zM146 514h4v1h-4zM160 514h1v1h-1zM30 515h2v1h-2zM47 515h1v1h-1zM143 515h3v1h-3zM160 515h1v1h-1zM32 516h2v1h-2zM46 516h1v1h-1zM161 516h1v1h-1zM34 517h1v1h-1zM44 517h2v1h-2zM162 517h1v1h-1zM35 518h2v1h-2zM40 518h4v1h-4zM162 518h1v1h-1zM37 519h3v1h-3zM163 519h1v1h-1zM164 520h1v1h-1zM164 521h1v1h-1zM165 522h1v1h-1zM166 523h1v1h-1zM166 524h1v1h-1zM167 525h1v1h-1zM167 526h1v1h-1zM168 527h1v1h-1zM168 528h1v1h-1zM169 529h1v1h-1zM169 530h1v1h-1zM170 531h1v1h-1zM170 532h1v1h-1zM170 533h1v1h-1zM171 534h1v1h-1zM171 535h1v1h-1zM172 536h1v1h-1zM172 537h1v1h-1zM172 538h1v1h-1zM173 539h1v1h-1zM173 540h1v1h-1zM174 541h1v1h-1zM174 542h1v1h-1zM175 543h1v1h-1zM175 544h1v1h-1zM175 545h1v1h-1zM176 546h1v1h-1zM176 547h1v1h-1zM177 548h1v1h-1zM177 549h1v1h-1zM177 550h1v1h-1zM178 551h1v1h-1zM178 552h1v1h-1zM178 553h1v1h-1zM179 554h1v1h-1zM179 555h1v1h-1zM180 556h1v1h-1zM180 557h1v1h-1zM180 558h1v1h-1zM181 559h1v1h-1zM204 559h5v1h-5zM181 560h1v1h-1zM198 560h6v1h-6zM209 560h1v1h-1zM181 561h1v1h-1zM196 561h2v1h-2zM210 561h1v1h-1zM182 562h1v1h-1zM193 562h3v1h-3zM211 562h2v1h-2zM182 563h1v1h-1zM190 563h3v1h-3zM213 563h1v1h-1zM183 564h1v1h-1zM186 564h4v1h-4zM214 564h1v1h-1zM183 565h3v1h-3zM215 565h1v1h-1zM221 565h4v1h-4zM216 566h5v1h-5zM225 566h2v1h-2zM227 567h2v1h-2zM229 568h1v1h-1zM230 569h2v1h-2zM232 570h1v1h-1zM233 571h1v1h-1zM233 572h1v1h-1zM234 573h1v1h-1zM235 574h1v1h-1zM235 575h1v1h-1zM248 575h1v1h-1zM236 576h1v1h-1zM247 576h1v1h-1zM249 576h2v1h-2zM237 577h1v1h-1zM246 577h1v1h-1zM251 577h1v1h-1zM237 578h1v1h-1zM245 578h1v1h-1zM252 578h1v1h-1zM238 579h1v1h-1zM243 579h2v1h-2zM253 579h2v1h-2zM239 580h1v1h-1zM242 580h1v1h-1zM255 580h1v1h-1zM239 581h1v1h-1zM241 581h1v1h-1zM256 581h1v1h-1zM240 582h1v1h-1zM257 582h1v1h-1zM258 583h2v1h-2zM260 584h1v1h-1zM261 585h1v1h-1zM286 585h4v1h-4zM370 585h1v1h-1zM262 586h2v1h-2zM280 586h6v1h-6zM290 586h1v1h-1zM369 586h1v1h-1zM371 586h2v1h-2zM264 587h1v1h-1zM276 587h4v1h-4zM291 587h1v1h-1zM368 587h1v1h-1zM373 587h1v1h-1zM265 588h11v1h-11zM291 588h1v1h-1zM368 588h1v1h-1zM374 588h1v1h-1zM292 589h1v1h-1zM367 589h1v1h-1zM375 589h2v1h-2zM293 590h1v1h-1zM366 590h1v1h-1zM377 590h1v1h-1zM294 591h1v1h-1zM365 591h1v1h-1zM378 591h9v1h-9zM295 592h1v1h-1zM304 592h3v1h-3zM364 592h1v1h-1zM387 592h1v1h-1zM295 593h1v1h-1zM302 593h2v1h-2zM307 593h3v1h-3zM364 593h1v1h-1zM388 593h1v1h-1zM403 593h1v1h-1zM296 594h1v1h-1zM299 594h3v1h-3zM310 594h2v1h-2zM354 594h5v1h-5zM363 594h1v1h-1zM389 594h1v1h-1zM402 594h1v1h-1zM404 594h2v1h-2zM297 595h2v1h-2zM312 595h2v1h-2zM353 595h1v1h-1zM359 595h4v1h-4zM390 595h1v1h-1zM401 595h1v1h-1zM406 595h1v1h-1zM314 596h1v1h-1zM353 596h1v1h-1zM391 596h1v1h-1zM400 596h1v1h-1zM407 596h1v1h-1zM315 597h1v1h-1zM352 597h1v1h-1zM392 597h1v1h-1zM398 597h2v1h-2zM408 597h2v1h-2zM418 597h4v1h-4zM316 598h1v1h-1zM351 598h1v1h-1zM393 598h1v1h-1zM397 598h1v1h-1zM410 598h1v1h-1zM414 598h4v1h-4zM422 598h4v1h-4zM476 598h1v1h-1zM317 599h1v1h-1zM350 599h1v1h-1zM394 599h1v1h-1zM396 599h1v1h-1zM411 599h3v1h-3zM426 599h6v1h-6zM474 599h2v1h-2zM317 600h1v1h-1zM350 600h1v1h-1zM395 600h1v1h-1zM432 600h6v1h-6zM472 600h2v1h-2zM318 601h1v1h-1zM349 601h1v1h-1zM438 601h4v1h-4zM470 601h2v1h-2zM319 602h1v1h-1zM328 602h3v1h-3zM348 602h1v1h-1zM442 602h13v1h-13zM467 602h3v1h-3zM320 603h1v1h-1zM324 603h4v1h-4zM331 603h1v1h-1zM347 603h1v1h-1zM455 603h4v1h-4zM463 603h4v1h-4zM321 604h3v1h-3zM332 604h1v1h-1zM347 604h1v1h-1zM459 604h4v1h-4zM333 605h1v1h-1zM346 605h1v1h-1zM334 606h1v1h-1zM344 606h2v1h-2zM335 607h1v1h-1zM343 607h1v1h-1zM336 608h1v1h-1zM341 608h2v1h-2zM337 609h1v1h-1zM339 609h2v1h-2zM338 610h1v1h-1z" fill="#0000ff" shape-rendering="crispEdges"/>
<path d="M20 520h3v1h-3zM16 521h4v1h-4zM23 521h3v1h-3zM13 522h3v1h-3zM26 522h2v1h-2zM131 522h5v1h-5zM151 522h9v1h-9zM28 523h6v1h-6zM123 523h8v1h-8zM136 523h2v1h-2zM149 523h2v1h-2zM160 523h1v1h-1zM34 524h5v1h-5zM115 524h8v1h-8zM138 524h2v1h-2zM147 524h2v1h-2zM161 524h1v1h-1zM39 525h3v1h-3zM52 525h12v1h-12zM109 525h6v1h-6zM140 525h2v1h-2zM145 525h2v1h-2zM162 525h2v1h-2zM42 526h2v1h-2zM48 526h4v1h-4zM64 526h4v1h-4zM105 526h4v1h-4zM142 526h3v1h-3zM164 526h1v1h-1zM44 527h4v1h-4zM68 527h12v1h-12zM101 527h4v1h-4zM165 527h1v1h-1zM80 528h2v1h-2zM97 528h4v1h-4zM166 528h1v1h-1zM82 529h2v1h-2zM93 529h4v1h-4zM167 529h1v1h-1zM84 530h2v1h-2zM89 530h4v1h-4zM168 530h1v1h-1zM86 531h3v1h-3zM169 531h1v1h-1zM169 532h1v1h-1zM170 533h1v1h-1zM171 534h1v1h-1zM172 535h1v1h-1zM173 536h1v1h-1zM173 537h1v1h-1zM174 538h1v1h-1zM175 539h1v1h-1zM176 540h1v1h-1zM177 541h1v1h-1zM178 542h1v1h-1zM179 543h1v1h-1zM179 544h1v1h-1zM180 545h1v1h-1zM196 545h13v1h-13zM181 546h1v1h-1zM190 546h6v1h-6zM209 546h1v1h-1zM182 547h1v1h-1zM186 547h4v1h-4zM210 547h1v1h-1zM183 548h3v1h-3zM211 548h2v1h-2zM213 549h1v1h-1zM214 550h1v1h-1zM215 551h1v1h-1zM216 552h2v1h-2zM218 553h2v1h-2zM220 554h2v1h-2zM222 555h2v1h-2zM224 556h5v1h-5zM229 557h4v1h-4zM233 558h1v1h-1zM234 559h1v1h-1zM235 560h2v1h-2zM237 561h1v1h-1zM238 562h1v1h-1zM239 563h1v1h-1zM240 564h9v1h-9zM249 565h1v1h-1zM249 566h1v1h-1zM250 567h1v1h-1zM251 568h1v1h-1zM251 569h1v1h-1zM252 570h1v1h-1zM253 571h1v1h-1zM253 572h1v1h-1zM254 573h1v1h-1zM255 574h1v1h-1zM255 575h1v1h-1zM256 576h3v1h-3zM259 577h4v1h-4zM263 578h7v1h-7zM270 579h16v1h-16zM286 580h5v1h-5zM291 581h2v1h-2zM293 582h2v1h-2zM295 583h2v1h-2zM297 584h5v1h-5zM302 585h12v1h-12zM314 586h2v1h-2zM316 587h2v1h-2zM318 588h1v1h-1zM319 589h2v1h-2zM321 590h10v1h-10zM331 591h2v1h-2zM333 592h1v1h-1zM334 593h1v1h-1zM335 594h2v1h-2zM337 595h1v1h-1zM338 596h5v1h-5zM343 597h14v1h-14zM369 597h2v1h-2zM357 598h4v1h-4zM365 598h4v1h-4zM371 598h1v1h-1zM361 599h4v1h-4zM372 599h1v1h-1zM373 600h1v1h-1zM374 601h1v1h-1zM375 602h1v1h-1zM376 603h1v1h-1zM377 604h1v1h-1zM378 605h5v1h-5zM383 606h4v1h-4zM387 607h1v1h-1zM388 608h2v1h-2zM390 609h1v1h-1zM391 610h1v1h-1zM392 611h2v1h-2zM402 611h3v1h-3zM394 612h1v1h-1zM398 612h4v1h-4zM405 612h2v1h-2zM395 613h3v1h-3zM407 613h2v1h-2zM409 614h2v1h-2zM411 615h13v1h-13zM432 615h8v1h-8zM424 616h8v1h-8zM440 616h8v1h-8zM448 617h9v1h-9zM465 617h12v1h-12zM457 618h8v1h-8z" fill="#0000ff" shape-rendering="crispEdges"/>
</svg>

<svg style="position:absolute;left:0;top:0" width="976" height="670" shape-rendering="crispEdges"><defs>
<path id="gY" d="M1 0h1v1h-1zM7 0h1v1h-1zM1 1h1v1h-1zM7 1h1v1h-1zM2 2h1v1h-1zM6 2h1v1h-1zM2 3h1v1h-1zM6 3h1v1h-1zM3 4h1v1h-1zM5 4h1v1h-1zM3 5h1v1h-1zM5 5h1v1h-1zM4 6h1v1h-1zM4 7h1v1h-1zM4 8h1v1h-1zM4 9h1v1h-1z"/>
<path id="gA" d="M4 0h1v1h-1zM4 1h1v1h-1zM3 2h1v1h-1zM5 2h1v1h-1zM3 3h1v1h-1zM5 3h1v1h-1zM2 4h1v1h-1zM6 4h1v1h-1zM2 5h1v1h-1zM6 5h1v1h-1zM2 6h5v1h-5zM1 7h1v1h-1zM7 7h1v1h-1zM1 8h1v1h-1zM7 8h1v1h-1zM1 9h1v1h-1zM7 9h1v1h-1z"/>
<path id="gB" d="M1 0h5v1h-5zM1 1h1v1h-1zM6 1h1v1h-1zM1 2h1v1h-1zM6 2h1v1h-1zM1 3h1v1h-1zM6 3h1v1h-1zM1 4h5v1h-5zM1 5h1v1h-1zM6 5h1v1h-1zM1 6h1v1h-1zM6 6h1v1h-1zM1 7h1v1h-1zM6 7h1v1h-1zM1 8h1v1h-1zM6 8h1v1h-1zM1 9h5v1h-5z"/>
<path id="gC" d="M3 0h4v1h-4zM2 1h1v1h-1zM7 1h1v1h-1zM1 2h1v1h-1zM1 3h1v1h-1zM1 4h1v1h-1zM1 5h1v1h-1zM1 6h1v1h-1zM1 7h1v1h-1zM2 8h1v1h-1zM7 8h1v1h-1zM3 9h4v1h-4z"/>
<path id="gD" d="M1 0h4v1h-4zM1 1h1v1h-1zM5 1h1v1h-1zM1 2h1v1h-1zM6 2h1v1h-1zM1 3h1v1h-1zM6 3h1v1h-1zM1 4h1v1h-1zM6 4h1v1h-1zM1 5h1v1h-1zM6 5h1v1h-1zM1 6h1v1h-1zM6 6h1v1h-1zM1 7h1v1h-1zM6 7h1v1h-1zM1 8h1v1h-1zM5 8h1v1h-1zM1 9h4v1h-4z"/>
<path id="gP" d="M1 0h5v1h-5zM1 1h1v1h-1zM6 1h1v1h-1zM1 2h1v1h-1zM6 2h1v1h-1zM1 3h1v1h-1zM6 3h1v1h-1zM1 4h1v1h-1zM6 4h1v1h-1zM1 5h5v1h-5zM1 6h1v1h-1zM1 7h1v1h-1zM1 8h1v1h-1zM1 9h1v1h-1z"/>
<path id="g0" d="M2 0h3v1h-3zM1 1h1v1h-1zM5 1h1v1h-1zM1 2h1v1h-1zM5 2h1v1h-1zM1 3h1v1h-1zM5 3h1v1h-1zM1 4h1v1h-1zM5 4h1v1h-1zM1 5h1v1h-1zM5 5h1v1h-1zM1 6h1v1h-1zM5 6h1v1h-1zM1 7h1v1h-1zM5 7h1v1h-1zM1 8h1v1h-1zM5 8h1v1h-1zM2 9h3v1h-3z"/>
<path id="g1" d="M3 0h1v1h-1zM2 1h2v1h-2zM3 2h1v1h-1zM3 3h1v1h-1zM3 4h1v1h-1zM3 5h1v1h-1zM3 6h1v1h-1zM3 7h1v1h-1zM3 8h1v1h-1zM3 9h1v1h-1z"/>
<path id="g2" d="M2 0h3v1h-3zM1 1h1v1h-1zM5 1h1v1h-1zM1 2h1v1h-1zM5 2h1v1h-1zM5 3h1v1h-1zM4 4h1v1h-1zM3 5h1v1h-1zM2 6h1v1h-1zM1 7h1v1h-1zM1 8h1v1h-1zM1 9h5v1h-5z"/>
<path id="g3" d="M2 0h3v1h-3zM1 1h1v1h-1zM5 1h1v1h-1zM5 2h1v1h-1zM5 3h1v1h-1zM2 4h3v1h-3zM5 5h1v1h-1zM5 6h1v1h-1zM5 7h1v1h-1zM1 8h1v1h-1zM5 8h1v1h-1zM2 9h3v1h-3z"/>
<path id="g4" d="M4 0h1v1h-1zM3 1h2v1h-2zM3 2h2v1h-2zM2 3h1v1h-1zM4 3h1v1h-1zM2 4h1v1h-1zM4 4h1v1h-1zM1 5h1v1h-1zM4 5h1v1h-1zM1 6h1v1h-1zM4 6h1v1h-1zM1 7h5v1h-5zM4 8h1v1h-1zM4 9h1v1h-1z"/>
<path id="g5" d="M1 0h5v1h-5zM1 1h1v1h-1zM1 2h1v1h-1zM1 3h1v1h-1zM1 4h4v1h-4zM1 5h1v1h-1zM5 5h1v1h-1zM5 6h1v1h-1zM5 7h1v1h-1zM1 8h1v1h-1zM5 8h1v1h-1zM2 9h3v1h-3z"/>
<path id="g6" d="M2 0h3v1h-3zM1 1h1v1h-1zM5 1h1v1h-1zM1 2h1v1h-1zM1 3h1v1h-1zM1 4h4v1h-4zM1 5h1v1h-1zM5 5h1v1h-1zM1 6h1v1h-1zM5 6h1v1h-1zM1 7h1v1h-1zM5 7h1v1h-1zM1 8h1v1h-1zM5 8h1v1h-1zM2 9h3v1h-3z"/>
<path id="g7" d="M1 0h5v1h-5zM5 1h1v1h-1zM5 2h1v1h-1zM4 3h1v1h-1zM4 4h1v1h-1zM4 5h1v1h-1zM3 6h1v1h-1zM3 7h1v1h-1zM3 8h1v1h-1zM3 9h1v1h-1z"/>
<path id="g8" d="M2 0h3v1h-3zM1 1h1v1h-1zM5 1h1v1h-1zM1 2h1v1h-1zM5 2h1v1h-1zM1 3h1v1h-1zM5 3h1v1h-1zM2 4h3v1h-3zM1 5h1v1h-1zM5 5h1v1h-1zM1 6h1v1h-1zM5 6h1v1h-1zM1 7h1v1h-1zM5 7h1v1h-1zM1 8h1v1h-1zM5 8h1v1h-1zM2 9h3v1h-3z"/>
<path id="g9" d="M2 0h3v1h-3zM1 1h1v1h-1zM5 1h1v1h-1zM1 2h1v1h-1zM5 2h1v1h-1zM1 3h1v1h-1zM5 3h1v1h-1zM1 4h1v1h-1zM5 4h1v1h-1zM2 5h4v1h-4zM5 6h1v1h-1zM5 7h1v1h-1zM1 8h1v1h-1zM5 8h1v1h-1zM2 9h3v1h-3z"/>
<path id="gc" d="M1 9h1v1h-1zM1 10h1v1h-1z"/>
<path id="gm" d="M1 5h5v1h-5z"/>
<path id="gs" d="M5 0h1v1h-1zM5 1h1v1h-1zM4 2h1v1h-1zM4 3h1v1h-1zM3 4h1v1h-1zM3 5h1v1h-1zM2 6h1v1h-1zM2 7h1v1h-1zM1 8h1v1h-1zM1 9h1v1h-1zM0 10h1v1h-1zM0 11h1v1h-1z"/>
<path id="k0" d="M2 0h8v1h-8zM9 1h1v1h-1zM9 2h1v1h-1zM8 3h1v1h-1zM1 4h10v1h-10zM6 5h1v1h-1zM6 6h1v1h-1zM2 7h8v1h-8zM9 8h1v1h-1zM9 9h1v1h-1zM9 10h1v1h-1z"/>
<path id="k1" d="M2 0h8v1h-8zM9 1h1v1h-1zM9 2h1v1h-1zM9 3h1v1h-1zM4 4h1v1h-1zM9 4h1v1h-1zM4 5h1v1h-1zM9 5h1v1h-1zM4 6h1v1h-1zM9 6h1v1h-1zM4 7h1v1h-1zM8 7h1v1h-1zM4 8h1v1h-1zM1 9h10v1h-10z"/>
<path id="k2" d="M2 0h8v1h-8zM6 1h1v1h-1zM5 2h1v1h-1zM7 2h1v1h-1zM4 3h1v1h-1zM8 3h1v1h-1zM2 4h2v1h-2zM9 4h1v1h-1zM1 7h10v1h-10zM6 8h1v1h-1zM6 9h1v1h-1zM6 10h1v1h-1z"/>
<path id="k3" d="M2 0h8v1h-8zM5 1h2v1h-2zM4 2h1v1h-1zM7 2h1v1h-1zM2 3h2v1h-2zM8 3h2v1h-2zM6 4h1v1h-1zM1 5h10v1h-10zM3 7h6v1h-6zM2 8h1v1h-1zM9 8h1v1h-1zM2 9h1v1h-1zM9 9h1v1h-1zM3 10h6v1h-6z"/>
<path id="k4" d="M2 0h8v1h-8zM2 1h1v1h-1zM2 2h8v1h-8zM2 3h1v1h-1zM2 4h8v1h-8zM6 5h1v1h-1zM1 6h10v1h-10zM3 8h6v1h-6zM2 9h1v1h-1zM9 9h1v1h-1zM3 10h6v1h-6z"/>
<path id="k5" d="M2 0h4v1h-4zM9 0h1v1h-1zM1 1h1v1h-1zM6 1h1v1h-1zM9 1h1v1h-1zM1 2h1v1h-1zM6 2h1v1h-1zM9 2h1v1h-1zM1 3h1v1h-1zM6 3h1v1h-1zM9 3h3v1h-3zM1 4h1v1h-1zM6 4h1v1h-1zM9 4h1v1h-1zM2 5h4v1h-4zM9 5h1v1h-1zM9 6h1v1h-1zM9 7h1v1h-1zM2 8h1v1h-1zM2 9h1v1h-1zM2 10h8v1h-8z"/>
<path id="k6" d="M2 0h3v1h-3zM9 0h1v1h-1zM9 1h1v1h-1zM0 2h7v1h-7zM9 2h1v1h-1zM2 3h3v1h-3zM9 3h3v1h-3zM1 4h1v1h-1zM5 4h1v1h-1zM9 4h1v1h-1zM1 5h1v1h-1zM5 5h1v1h-1zM9 5h1v1h-1zM2 6h3v1h-3zM9 6h1v1h-1zM9 7h1v1h-1zM2 8h1v1h-1zM2 9h1v1h-1zM2 10h8v1h-8z"/>
<path id="k7" d="M1 0h7v1h-7zM9 0h1v1h-1zM4 1h1v1h-1zM9 1h1v1h-1zM4 2h1v1h-1zM7 2h3v1h-3zM3 3h1v1h-1zM5 3h1v1h-1zM9 3h1v1h-1zM3 4h1v1h-1zM6 4h1v1h-1zM9 4h1v1h-1zM2 5h1v1h-1zM7 5h1v1h-1zM9 5h1v1h-1zM1 6h1v1h-1zM9 6h1v1h-1zM9 7h1v1h-1zM2 8h1v1h-1zM2 9h1v1h-1zM2 10h8v1h-8z"/>
<path id="k8" d="M4 0h1v1h-1zM9 0h1v1h-1zM4 1h1v1h-1zM9 1h1v1h-1zM4 2h1v1h-1zM9 2h1v1h-1zM3 3h1v1h-1zM5 3h1v1h-1zM9 3h3v1h-3zM3 4h1v1h-1zM6 4h1v1h-1zM9 4h1v1h-1zM2 5h1v1h-1zM7 5h1v1h-1zM9 5h1v1h-1zM1 6h1v1h-1zM9 6h1v1h-1zM9 7h1v1h-1zM2 8h1v1h-1zM2 9h1v1h-1zM2 10h8v1h-8z"/>
<path id="k9" d="M2 0h8v1h-8zM9 1h1v1h-1zM9 2h1v1h-1zM8 3h1v1h-1zM1 4h10v1h-10zM2 7h8v1h-8zM2 8h1v1h-1zM9 8h1v1h-1zM2 9h1v1h-1zM9 9h1v1h-1zM2 10h8v1h-8z"/>
<path id="k10" d="M3 0h3v1h-3zM9 0h1v1h-1zM9 1h1v1h-1zM1 2h7v1h-7zM9 2h1v1h-1zM9 3h1v1h-1zM3 4h3v1h-3zM9 4h1v1h-1zM2 5h1v1h-1zM6 5h1v1h-1zM9 5h1v1h-1zM2 6h1v1h-1zM6 6h1v1h-1zM9 6h1v1h-1zM3 7h3v1h-3zM9 7h1v1h-1zM4 8h1v1h-1zM9 8h1v1h-1zM1 9h7v1h-7zM9 9h1v1h-1zM9 10h1v1h-1z"/>
<path id="k11" d="M4 0h1v1h-1zM9 0h1v1h-1zM4 1h1v1h-1zM9 1h1v1h-1zM4 2h1v1h-1zM9 2h1v1h-1zM4 3h1v1h-1zM9 3h1v1h-1zM4 4h1v1h-1zM9 4h1v1h-1zM3 5h1v1h-1zM5 5h1v1h-1zM9 5h3v1h-3zM3 6h1v1h-1zM5 6h1v1h-1zM9 6h1v1h-1zM2 7h1v1h-1zM6 7h1v1h-1zM9 7h1v1h-1zM2 8h1v1h-1zM6 8h1v1h-1zM9 8h1v1h-1zM1 9h1v1h-1zM7 9h1v1h-1zM9 9h1v1h-1zM9 10h1v1h-1z"/>
<path id="k12" d="M2 0h4v1h-4zM9 0h1v1h-1zM1 1h1v1h-1zM6 1h1v1h-1zM9 1h1v1h-1zM1 2h1v1h-1zM6 2h1v1h-1zM9 2h1v1h-1zM1 3h1v1h-1zM6 3h1v1h-1zM9 3h1v1h-1zM2 4h4v1h-4zM9 4h1v1h-1zM2 6h8v1h-8zM9 7h1v1h-1zM2 8h8v1h-8zM2 9h1v1h-1zM2 10h8v1h-8z"/>
<path id="k13" d="M1 0h7v1h-7zM9 0h1v1h-1zM4 1h1v1h-1zM9 1h1v1h-1zM4 2h1v1h-1zM9 2h1v1h-1zM4 3h1v1h-1zM9 3h1v1h-1zM4 4h1v1h-1zM9 4h1v1h-1zM3 5h1v1h-1zM5 5h1v1h-1zM9 5h3v1h-3zM3 6h1v1h-1zM5 6h1v1h-1zM9 6h1v1h-1zM2 7h1v1h-1zM6 7h1v1h-1zM9 7h1v1h-1zM2 8h1v1h-1zM6 8h1v1h-1zM9 8h1v1h-1zM1 9h1v1h-1zM7 9h1v1h-1zM9 9h1v1h-1zM9 10h1v1h-1z"/>
<path id="k14" d="M4 0h1v1h-1zM9 0h1v1h-1zM4 1h1v1h-1zM9 1h1v1h-1zM4 2h1v1h-1zM9 2h1v1h-1zM4 3h1v1h-1zM9 3h1v1h-1zM4 4h1v1h-1zM9 4h1v1h-1zM3 5h1v1h-1zM5 5h1v1h-1zM9 5h1v1h-1zM3 6h1v1h-1zM5 6h1v1h-1zM9 6h1v1h-1zM2 7h1v1h-1zM6 7h1v1h-1zM9 7h1v1h-1zM2 8h1v1h-1zM6 8h1v1h-1zM9 8h1v1h-1zM1 9h1v1h-1zM7 9h1v1h-1zM9 9h1v1h-1zM9 10h1v1h-1z"/>
<path id="k15" d="M2 0h1v1h-1zM9 0h1v1h-1zM2 1h1v1h-1zM9 1h1v1h-1zM2 2h8v1h-8zM2 3h1v1h-1zM9 3h1v1h-1zM2 4h8v1h-8zM1 6h10v1h-10zM6 7h1v1h-1zM2 8h1v1h-1zM6 8h1v1h-1zM2 9h1v1h-1zM2 10h8v1h-8z"/>
<path id="k16" d="M1 0h6v1h-6zM9 0h1v1h-1zM6 1h1v1h-1zM9 1h1v1h-1zM6 2h1v1h-1zM9 2h1v1h-1zM6 3h1v1h-1zM9 3h1v1h-1zM6 4h1v1h-1zM9 4h1v1h-1zM5 5h1v1h-1zM9 5h1v1h-1zM5 6h1v1h-1zM9 6h1v1h-1zM4 7h1v1h-1zM9 7h1v1h-1zM3 8h1v1h-1zM9 8h1v1h-1zM1 9h2v1h-2zM9 9h1v1h-1zM9 10h1v1h-1z"/>
<path id="k17" d="M1 0h4v1h-4zM6 0h1v1h-1zM9 0h1v1h-1zM1 1h1v1h-1zM6 1h1v1h-1zM9 1h1v1h-1zM1 2h1v1h-1zM6 2h1v1h-1zM9 2h1v1h-1zM1 3h1v1h-1zM6 3h1v1h-1zM9 3h1v1h-1zM1 4h1v1h-1zM6 4h1v1h-1zM9 4h1v1h-1zM1 5h1v1h-1zM6 5h4v1h-4zM1 6h1v1h-1zM6 6h1v1h-1zM9 6h1v1h-1zM1 7h1v1h-1zM6 7h1v1h-1zM9 7h1v1h-1zM1 8h1v1h-1zM6 8h1v1h-1zM9 8h1v1h-1zM1 9h4v1h-4zM6 9h1v1h-1zM9 9h1v1h-1zM6 10h1v1h-1zM9 10h1v1h-1z"/>
<path id="k18" d="M1 0h1v1h-1zM6 0h1v1h-1zM9 0h1v1h-1zM1 1h1v1h-1zM6 1h1v1h-1zM9 1h1v1h-1zM1 2h1v1h-1zM6 2h1v1h-1zM9 2h1v1h-1zM1 3h1v1h-1zM6 3h1v1h-1zM9 3h1v1h-1zM1 4h6v1h-6zM9 4h1v1h-1zM1 5h1v1h-1zM6 5h1v1h-1zM9 5h1v1h-1zM1 6h1v1h-1zM6 6h1v1h-1zM9 6h1v1h-1zM1 7h1v1h-1zM6 7h1v1h-1zM9 7h1v1h-1zM1 8h1v1h-1zM6 8h1v1h-1zM9 8h1v1h-1zM1 9h6v1h-6zM9 9h1v1h-1zM9 10h1v1h-1z"/>
</defs>
<g fill="#fff"><use href="#k12" x="19" y="25"/><use href="#k13" x="39" y="25"/><use href="#k0" x="73" y="11"/><use href="#k1" x="85" y="11"/><use href="#g1" x="97" y="11"/><use href="#gY" x="103" y="11"/><use href="#k0" x="123" y="11"/><use href="#k1" x="135" y="11"/><use href="#g2" x="147" y="11"/><use href="#gY" x="153" y="11"/><use href="#k0" x="173" y="11"/><use href="#k1" x="185" y="11"/><use href="#g3" x="197" y="11"/><use href="#gY" x="203" y="11"/><use href="#k0" x="223" y="11"/><use href="#k1" x="235" y="11"/><use href="#g5" x="247" y="11"/><use href="#gY" x="253" y="11"/><use href="#k0" x="270" y="11"/><use href="#k1" x="282" y="11"/><use href="#g1" x="294" y="11"/><use href="#g0" x="300" y="11"/><use href="#gY" x="306" y="11"/><use href="#k0" x="320" y="11"/><use href="#k1" x="332" y="11"/><use href="#g2" x="344" y="11"/><use href="#g0" x="350" y="11"/><use href="#gY" x="356" y="11"/><use href="#k0" x="370" y="11"/><use href="#k1" x="382" y="11"/><use href="#g3" x="394" y="11"/><use href="#g0" x="400" y="11"/><use href="#gY" x="406" y="11"/><use href="#k0" x="420" y="11"/><use href="#k1" x="432" y="11"/><use href="#g5" x="444" y="11"/><use href="#g0" x="450" y="11"/><use href="#gY" x="456" y="11"/><use href="#k0" x="471" y="11"/><use href="#k2" x="483" y="11"/><use href="#g1" x="495" y="11"/><use href="#k3" x="501" y="11"/><use href="#k4" x="524" y="11"/><use href="#k5" x="536" y="11"/><use href="#g9" x="548" y="11"/><use href="#g1" x="554" y="11"/><use href="#k4" x="573" y="11"/><use href="#k5" x="585" y="11"/><use href="#g1" x="597" y="11"/><use href="#gY" x="603" y="11"/><use href="#k4" x="623" y="11"/><use href="#k5" x="635" y="11"/><use href="#g2" x="647" y="11"/><use href="#gY" x="653" y="11"/><use href="#k6" x="673" y="11"/><use href="#k7" x="685" y="11"/><use href="#g3" x="697" y="11"/><use href="#gY" x="703" y="11"/><use href="#k8" x="723" y="11"/><use href="#k9" x="735" y="11"/><use href="#g1" x="747" y="11"/><use href="#gY" x="753" y="11"/><use href="#k10" x="769" y="11"/><use href="#k11" x="781" y="11"/><use href="#gA" x="793" y="11"/><use href="#gA" x="801" y="11"/><use href="#gm" x="809" y="11"/><use href="#k10" x="818" y="11"/><use href="#k11" x="830" y="11"/><use href="#gB" x="842" y="11"/><use href="#gB" x="850" y="11"/><use href="#gB" x="858" y="11"/><use href="#gm" x="866" y="11"/><use href="#gC" x="929" y="11"/><use href="#gP" x="938" y="11"/><use href="#g9" x="946" y="11"/><use href="#g1" x="952" y="11"/><use href="#gD" x="958" y="11"/><use href="#k0" x="565" y="334"/><use href="#k1" x="577" y="334"/><use href="#g5" x="589" y="334"/><use href="#gY" x="595" y="334"/><use href="#g1" x="653" y="334"/><use href="#g1" x="659" y="334"/><use href="#k14" x="665" y="334"/><use href="#g3" x="677" y="334"/><use href="#g0" x="683" y="334"/><use href="#k15" x="689" y="334"/><use href="#g1" x="738" y="334"/><use href="#g6" x="744" y="334"/><use href="#k14" x="750" y="334"/><use href="#g0" x="762" y="334"/><use href="#g0" x="768" y="334"/><use href="#k15" x="774" y="334"/><use href="#k7" x="834" y="334"/><use href="#k16" x="846" y="334"/><use href="#k7" x="906" y="334"/><use href="#k16" x="918" y="334"/><use href="#k17" x="930" y="334"/><use href="#k18" x="942" y="334"/></g>
<g fill="#000"><use href="#gC" x="889" y="11"/><use href="#gD" x="898" y="11"/><use href="#g2" x="11" y="67"/><use href="#g5" x="17" y="67"/><use href="#gs" x="23" y="67"/><use href="#g0" x="29" y="67"/><use href="#g6" x="35" y="67"/><use href="#gs" x="41" y="67"/><use href="#g0" x="47" y="67"/><use href="#g2" x="53" y="67"/><use href="#gm" x="107" y="67"/><use href="#gm" x="157" y="67"/><use href="#gm" x="207" y="67"/><use href="#gm" x="257" y="67"/><use href="#gm" x="307" y="67"/><use href="#gm" x="357" y="67"/><use href="#gm" x="407" y="67"/><use href="#gm" x="457" y="67"/><use href="#gm" x="507" y="67"/><use href="#gm" x="557" y="67"/><use href="#gm" x="607" y="67"/><use href="#gm" x="657" y="67"/><use href="#gm" x="707" y="67"/><use href="#gm" x="757" y="67"/><use href="#gm" x="807" y="67"/><use href="#gm" x="862" y="67"/><use href="#gm" x="912" y="67"/><use href="#gm" x="962" y="67"/><use href="#g2" x="11" y="95"/><use href="#g5" x="17" y="95"/><use href="#gs" x="23" y="95"/><use href="#g0" x="29" y="95"/><use href="#g5" x="35" y="95"/><use href="#gs" x="41" y="95"/><use href="#g3" x="47" y="95"/><use href="#g0" x="53" y="95"/><use href="#g2" x="85" y="95"/><use href="#gc" x="91" y="95"/><use href="#g2" x="95" y="95"/><use href="#g7" x="101" y="95"/><use href="#g6" x="107" y="95"/><use href="#g2" x="135" y="95"/><use href="#gc" x="141" y="95"/><use href="#g3" x="145" y="95"/><use href="#g4" x="151" y="95"/><use href="#g3" x="157" y="95"/><use href="#g2" x="185" y="95"/><use href="#gc" x="191" y="95"/><use href="#g3" x="195" y="95"/><use href="#g4" x="201" y="95"/><use href="#g7" x="207" y="95"/><use href="#g2" x="235" y="95"/><use href="#gc" x="241" y="95"/><use href="#g5" x="245" y="95"/><use href="#g2" x="251" y="95"/><use href="#g1" x="257" y="95"/><use href="#g2" x="285" y="95"/><use href="#gc" x="291" y="95"/><use href="#g7" x="295" y="95"/><use href="#g8" x="301" y="95"/><use href="#g6" x="307" y="95"/><use href="#g2" x="335" y="95"/><use href="#gc" x="341" y="95"/><use href="#g7" x="345" y="95"/><use href="#g3" x="351" y="95"/><use href="#g3" x="357" y="95"/><use href="#g2" x="385" y="95"/><use href="#gc" x="391" y="95"/><use href="#g6" x="395" y="95"/><use href="#g2" x="401" y="95"/><use href="#g9" x="407" y="95"/><use href="#g2" x="435" y="95"/><use href="#gc" x="441" y="95"/><use href="#g5" x="445" y="95"/><use href="#g2" x="451" y="95"/><use href="#g4" x="457" y="95"/><use href="#g2" x="485" y="95"/><use href="#gc" x="491" y="95"/><use href="#g6" x="495" y="95"/><use href="#g5" x="501" y="95"/><use href="#g5" x="507" y="95"/><use href="#g2" x="535" y="95"/><use href="#gc" x="541" y="95"/><use href="#g5" x="545" y="95"/><use href="#g0" x="551" y="95"/><use href="#g9" x="557" y="95"/><use href="#g2" x="585" y="95"/><use href="#gc" x="591" y="95"/><use href="#g2" x="595" y="95"/><use href="#g7" x="601" y="95"/><use href="#g4" x="607" y="95"/><use href="#g2" x="635" y="95"/><use href="#gc" x="641" y="95"/><use href="#g3" x="645" y="95"/><use href="#g2" x="651" y="95"/><use href="#g9" x="657" y="95"/><use href="#g2" x="685" y="95"/><use href="#gc" x="691" y="95"/><use href="#g6" x="695" y="95"/><use href="#g4" x="701" y="95"/><use href="#g5" x="707" y="95"/><use href="#g2" x="735" y="95"/><use href="#gc" x="741" y="95"/><use href="#g4" x="745" y="95"/><use href="#g9" x="751" y="95"/><use href="#g1" x="757" y="95"/><use href="#g2" x="785" y="95"/><use href="#gc" x="791" y="95"/><use href="#g9" x="795" y="95"/><use href="#g1" x="801" y="95"/><use href="#g7" x="807" y="95"/><use href="#g8" x="840" y="95"/><use href="#gc" x="846" y="95"/><use href="#g6" x="850" y="95"/><use href="#g6" x="856" y="95"/><use href="#g9" x="862" y="95"/><use href="#g2" x="890" y="95"/><use href="#gc" x="896" y="95"/><use href="#g5" x="900" y="95"/><use href="#g9" x="906" y="95"/><use href="#g0" x="912" y="95"/><use href="#g2" x="940" y="95"/><use href="#gc" x="946" y="95"/><use href="#g7" x="950" y="95"/><use href="#g7" x="956" y="95"/><use href="#g0" x="962" y="95"/><use href="#g2" x="11" y="123"/><use href="#g5" x="17" y="123"/><use href="#gs" x="23" y="123"/><use href="#g0" x="29" y="123"/><use href="#g5" x="35" y="123"/><use href="#gs" x="41" y="123"/><use href="#g2" x="47" y="123"/><use href="#g9" x="53" y="123"/><use href="#g2" x="85" y="123"/><use href="#gc" x="91" y="123"/><use href="#g2" x="95" y="123"/><use href="#g7" x="101" y="123"/><use href="#g6" x="107" y="123"/><use href="#g2" x="135" y="123"/><use href="#gc" x="141" y="123"/><use href="#g3" x="145" y="123"/><use href="#g3" x="151" y="123"/><use href="#g1" x="157" y="123"/><use href="#g2" x="185" y="123"/><use href="#gc" x="191" y="123"/><use href="#g3" x="195" y="123"/><use href="#g4" x="201" y="123"/><use href="#g1" x="207" y="123"/><use href="#g2" x="235" y="123"/><use href="#gc" x="241" y="123"/><use href="#g5" x="245" y="123"/><use href="#g0" x="251" y="123"/><use href="#g0" x="257" y="123"/><use href="#g2" x="285" y="123"/><use href="#gc" x="291" y="123"/><use href="#g7" x="295" y="123"/><use href="#g6" x="301" y="123"/><use href="#g0" x="307" y="123"/><use href="#g2" x="335" y="123"/><use href="#gc" x="341" y="123"/><use href="#g7" x="345" y="123"/><use href="#g1" x="351" y="123"/><use href="#g8" x="357" y="123"/><use href="#g2" x="385" y="123"/><use href="#gc" x="391" y="123"/><use href="#g6" x="395" y="123"/><use href="#g0" x="401" y="123"/><use href="#g9" x="407" y="123"/><use href="#g2" x="435" y="123"/><use href="#gc" x="441" y="123"/><use href="#g5" x="445" y="123"/><use href="#g0" x="451" y="123"/><use href="#g5" x="457" y="123"/><use href="#g2" x="485" y="123"/><use href="#gc" x="491" y="123"/><use href="#g6" x="495" y="123"/><use href="#g4" x="501" y="123"/><use href="#g5" x="507" y="123"/><use href="#g2" x="535" y="123"/><use href="#gc" x="541" y="123"/><use href="#g5" x="545" y="123"/><use href="#g0" x="551" y="123"/><use href="#g9" x="557" y="123"/><use href="#g2" x="585" y="123"/><use href="#gc" x="591" y="123"/><use href="#g2" x="595" y="123"/><use href="#g7" x="601" y="123"/><use href="#g1" x="607" y="123"/><use href="#g2" x="635" y="123"/><use href="#gc" x="641" y="123"/><use href="#g3" x="645" y="123"/><use href="#g3" x="651" y="123"/><use href="#g1" x="657" y="123"/><use href="#g2" x="685" y="123"/><use href="#gc" x="691" y="123"/><use href="#g6" x="695" y="123"/><use href="#g3" x="701" y="123"/><use href="#g7" x="707" y="123"/><use href="#g2" x="735" y="123"/><use href="#gc" x="741" y="123"/><use href="#g4" x="745" y="123"/><use href="#g8" x="751" y="123"/><use href="#g7" x="757" y="123"/><use href="#g2" x="785" y="123"/><use href="#gc" x="791" y="123"/><use href="#g9" x="795" y="123"/><use href="#g1" x="801" y="123"/><use href="#g4" x="807" y="123"/><use href="#g8" x="840" y="123"/><use href="#gc" x="846" y="123"/><use href="#g6" x="850" y="123"/><use href="#g6" x="856" y="123"/><use href="#g2" x="862" y="123"/><use href="#g2" x="890" y="123"/><use href="#gc" x="896" y="123"/><use href="#g6" x="900" y="123"/><use href="#g0" x="906" y="123"/><use href="#g0" x="912" y="123"/><use href="#g2" x="940" y="123"/><use href="#gc" x="946" y="123"/><use href="#g9" x="950" y="123"/><use href="#g0" x="956" y="123"/><use href="#g0" x="962" y="123"/><use href="#g2" x="11" y="151"/><use href="#g5" x="17" y="151"/><use href="#gs" x="23" y="151"/><use href="#g0" x="29" y="151"/><use href="#g5" x="35" y="151"/><use href="#gs" x="41" y="151"/><use href="#g2" x="47" y="151"/><use href="#g8" x="53" y="151"/><use href="#g2" x="85" y="151"/><use href="#gc" x="91" y="151"/><use href="#g2" x="95" y="151"/><use href="#g7" x="101" y="151"/><use href="#g0" x="107" y="151"/><use href="#g2" x="135" y="151"/><use href="#gc" x="141" y="151"/><use href="#g3" x="145" y="151"/><use href="#g2" x="151" y="151"/><use href="#g3" x="157" y="151"/><use href="#g2" x="185" y="151"/><use href="#gc" x="191" y="151"/><use href="#g3" x="195" y="151"/><use href="#g1" x="201" y="151"/><use href="#g4" x="207" y="151"/><use href="#g2" x="235" y="151"/><use href="#gc" x="241" y="151"/><use href="#g4" x="245" y="151"/><use href="#g6" x="251" y="151"/><use href="#g7" x="257" y="151"/><use href="#g2" x="285" y="151"/><use href="#gc" x="291" y="151"/><use href="#g7" x="295" y="151"/><use href="#g0" x="301" y="151"/><use href="#g6" x="307" y="151"/><use href="#g2" x="335" y="151"/><use href="#gc" x="341" y="151"/><use href="#g6" x="345" y="151"/><use href="#g8" x="351" y="151"/><use href="#g6" x="357" y="151"/><use href="#g2" x="385" y="151"/><use href="#gc" x="391" y="151"/><use href="#g5" x="395" y="151"/><use href="#g7" x="401" y="151"/><use href="#g5" x="407" y="151"/><use href="#g2" x="435" y="151"/><use href="#gc" x="441" y="151"/><use href="#g4" x="445" y="151"/><use href="#g7" x="451" y="151"/><use href="#g3" x="457" y="151"/><use href="#g2" x="485" y="151"/><use href="#gc" x="491" y="151"/><use href="#g6" x="495" y="151"/><use href="#g1" x="501" y="151"/><use href="#g5" x="507" y="151"/><use href="#g2" x="535" y="151"/><use href="#gc" x="541" y="151"/><use href="#g5" x="545" y="151"/><use href="#g0" x="551" y="151"/><use href="#g9" x="557" y="151"/><use href="#g2" x="585" y="151"/><use href="#gc" x="591" y="151"/><use href="#g2" x="595" y="151"/><use href="#g6" x="601" y="151"/><use href="#g6" x="607" y="151"/><use href="#g2" x="635" y="151"/><use href="#gc" x="641" y="151"/><use href="#g3" x="645" y="151"/><use href="#g1" x="651" y="151"/><use href="#g9" x="657" y="151"/><use href="#g2" x="685" y="151"/><use href="#gc" x="691" y="151"/><use href="#g6" x="695" y="151"/><use href="#g1" x="701" y="151"/><use href="#g2" x="707" y="151"/><use href="#g2" x="735" y="151"/><use href="#gc" x="741" y="151"/><use href="#g4" x="745" y="151"/><use href="#g7" x="751" y="151"/><use href="#g9" x="757" y="151"/><use href="#g2" x="785" y="151"/><use href="#gc" x="791" y="151"/><use href="#g8" x="795" y="151"/><use href="#g9" x="801" y="151"/><use href="#g3" x="807" y="151"/><use href="#g8" x="840" y="151"/><use href="#gc" x="846" y="151"/><use href="#g6" x="850" y="151"/><use href="#g4" x="856" y="151"/><use href="#g1" x="862" y="151"/><use href="#g2" x="890" y="151"/><use href="#gc" x="896" y="151"/><use href="#g6" x="900" y="151"/><use href="#g3" x="906" y="151"/><use href="#g0" x="912" y="151"/><use href="#g2" x="940" y="151"/><use href="#gc" x="946" y="151"/><use href="#g9" x="950" y="151"/><use href="#g1" x="956" y="151"/><use href="#g0" x="962" y="151"/><use href="#g2" x="11" y="180"/><use href="#g5" x="17" y="180"/><use href="#gs" x="23" y="180"/><use href="#g0" x="29" y="180"/><use href="#g5" x="35" y="180"/><use href="#gs" x="41" y="180"/><use href="#g2" x="47" y="180"/><use href="#g7" x="53" y="180"/><use href="#g2" x="85" y="180"/><use href="#gc" x="91" y="180"/><use href="#g2" x="95" y="180"/><use href="#g7" x="101" y="180"/><use href="#g6" x="107" y="180"/><use href="#g2" x="135" y="180"/><use href="#gc" x="141" y="180"/><use href="#g3" x="145" y="180"/><use href="#g3" x="151" y="180"/><use href="#g0" x="157" y="180"/><use href="#g2" x="185" y="180"/><use href="#gc" x="191" y="180"/><use href="#g3" x="195" y="180"/><use href="#g4" x="201" y="180"/><use href="#g0" x="207" y="180"/><use href="#g2" x="235" y="180"/><use href="#gc" x="241" y="180"/><use href="#g4" x="245" y="180"/><use href="#g7" x="251" y="180"/><use href="#g8" x="257" y="180"/><use href="#g2" x="285" y="180"/><use href="#gc" x="291" y="180"/><use href="#g7" x="295" y="180"/><use href="#g0" x="301" y="180"/><use href="#g9" x="307" y="180"/><use href="#g2" x="335" y="180"/><use href="#gc" x="341" y="180"/><use href="#g6" x="345" y="180"/><use href="#g9" x="351" y="180"/><use href="#g8" x="357" y="180"/><use href="#g2" x="385" y="180"/><use href="#gc" x="391" y="180"/><use href="#g5" x="395" y="180"/><use href="#g8" x="401" y="180"/><use href="#g7" x="407" y="180"/><use href="#g2" x="435" y="180"/><use href="#gc" x="441" y="180"/><use href="#g4" x="445" y="180"/><use href="#g8" x="451" y="180"/><use href="#g3" x="457" y="180"/><use href="#g2" x="485" y="180"/><use href="#gc" x="491" y="180"/><use href="#g6" x="495" y="180"/><use href="#g2" x="501" y="180"/><use href="#g4" x="507" y="180"/><use href="#g2" x="535" y="180"/><use href="#gc" x="541" y="180"/><use href="#g5" x="545" y="180"/><use href="#g1" x="551" y="180"/><use href="#g2" x="557" y="180"/><use href="#g2" x="585" y="180"/><use href="#gc" x="591" y="180"/><use href="#g2" x="595" y="180"/><use href="#g7" x="601" y="180"/><use href="#g6" x="607" y="180"/><use href="#g2" x="635" y="180"/><use href="#gc" x="641" y="180"/><use href="#g3" x="645" y="180"/><use href="#g3" x="651" y="180"/><use href="#g5" x="657" y="180"/><use href="#g2" x="685" y="180"/><use href="#gc" x="691" y="180"/><use href="#g6" x="695" y="180"/><use href="#g3" x="701" y="180"/><use href="#g1" x="707" y="180"/><use href="#g2" x="735" y="180"/><use href="#gc" x="741" y="180"/><use href="#g4" x="745" y="180"/><use href="#g8" x="751" y="180"/><use href="#g1" x="757" y="180"/><use href="#g2" x="785" y="180"/><use href="#gc" x="791" y="180"/><use href="#g9" x="795" y="180"/><use href="#g1" x="801" y="180"/><use href="#g3" x="807" y="180"/><use href="#g8" x="840" y="180"/><use href="#gc" x="846" y="180"/><use href="#g6" x="850" y="180"/><use href="#g5" x="856" y="180"/><use href="#g6" x="862" y="180"/><use href="#g2" x="890" y="180"/><use href="#gc" x="896" y="180"/><use href="#g6" x="900" y="180"/><use href="#g6" x="906" y="180"/><use href="#g0" x="912" y="180"/><use href="#g2" x="940" y="180"/><use href="#gc" x="946" y="180"/><use href="#g9" x="950" y="180"/><use href="#g1" x="956" y="180"/><use href="#g0" x="962" y="180"/><use href="#g2" x="11" y="208"/><use href="#g5" x="17" y="208"/><use href="#gs" x="23" y="208"/><use href="#g0" x="29" y="208"/><use href="#g5" x="35" y="208"/><use href="#gs" x="41" y="208"/><use href="#g2" x="47" y="208"/><use href="#g6" x="53" y="208"/><use href="#g2" x="85" y="208"/><use href="#gc" x="91" y="208"/><use href="#g2" x="95" y="208"/><use href="#g8" x="101" y="208"/><use href="#g0" x="107" y="208"/><use href="#g2" x="135" y="208"/><use href="#gc" x="141" y="208"/><use href="#g3" x="145" y="208"/><use href="#g3" x="151" y="208"/><use href="#g0" x="157" y="208"/><use href="#g2" x="185" y="208"/><use href="#gc" x="191" y="208"/><use href="#g3" x="195" y="208"/><use href="#g4" x="201" y="208"/><use href="#g8" x="207" y="208"/><use href="#g2" x="235" y="208"/><use href="#gc" x="241" y="208"/><use href="#g5" x="245" y="208"/><use href="#g0" x="251" y="208"/><use href="#g4" x="257" y="208"/><use href="#g2" x="285" y="208"/><use href="#gc" x="291" y="208"/><use href="#g7" x="295" y="208"/><use href="#g6" x="301" y="208"/><use href="#g6" x="307" y="208"/><use href="#g2" x="335" y="208"/><use href="#gc" x="341" y="208"/><use href="#g7" x="345" y="208"/><use href="#g3" x="351" y="208"/><use href="#g2" x="357" y="208"/><use href="#g2" x="385" y="208"/><use href="#gc" x="391" y="208"/><use href="#g6" x="395" y="208"/><use href="#g3" x="401" y="208"/><use href="#g1" x="407" y="208"/><use href="#g2" x="435" y="208"/><use href="#gc" x="441" y="208"/><use href="#g5" x="445" y="208"/><use href="#g2" x="451" y="208"/><use href="#g7" x="457" y="208"/><use href="#g2" x="485" y="208"/><use href="#gc" x="491" y="208"/><use href="#g6" x="495" y="208"/><use href="#g4" x="501" y="208"/><use href="#g8" x="507" y="208"/><use href="#g2" x="535" y="208"/><use href="#gc" x="541" y="208"/><use href="#g5" x="545" y="208"/><use href="#g1" x="551" y="208"/><use href="#g7" x="557" y="208"/><use href="#g2" x="585" y="208"/><use href="#gc" x="591" y="208"/><use href="#g2" x="595" y="208"/><use href="#g8" x="601" y="208"/><use href="#g6" x="607" y="208"/><use href="#g2" x="635" y="208"/><use href="#gc" x="641" y="208"/><use href="#g3" x="645" y="208"/><use href="#g3" x="651" y="208"/><use href="#g6" x="657" y="208"/><use href="#g2" x="685" y="208"/><use href="#gc" x="691" y="208"/><use href="#g6" x="695" y="208"/><use href="#g4" x="701" y="208"/><use href="#g0" x="707" y="208"/><use href="#g2" x="735" y="208"/><use href="#gc" x="741" y="208"/><use href="#g4" x="745" y="208"/><use href="#g8" x="751" y="208"/><use href="#g6" x="757" y="208"/><use href="#g2" x="785" y="208"/><use href="#gc" x="791" y="208"/><use href="#g9" x="795" y="208"/><use href="#g2" x="801" y="208"/><use href="#g6" x="807" y="208"/><use href="#g8" x="840" y="208"/><use href="#gc" x="846" y="208"/><use href="#g6" x="850" y="208"/><use href="#g6" x="856" y="208"/><use href="#g7" x="862" y="208"/><use href="#g2" x="890" y="208"/><use href="#gc" x="896" y="208"/><use href="#g6" x="900" y="208"/><use href="#g7" x="906" y="208"/><use href="#g0" x="912" y="208"/><use href="#g2" x="940" y="208"/><use href="#gc" x="946" y="208"/><use href="#g9" x="950" y="208"/><use href="#g1" x="956" y="208"/><use href="#g0" x="962" y="208"/><use href="#g2" x="11" y="236"/><use href="#g5" x="17" y="236"/><use href="#gs" x="23" y="236"/><use href="#g0" x="29" y="236"/><use href="#g5" x="35" y="236"/><use href="#gs" x="41" y="236"/><use href="#g2" x="47" y="236"/><use href="#g3" x="53" y="236"/><use href="#g2" x="85" y="236"/><use href="#gc" x="91" y="236"/><use href="#g2" x="95" y="236"/><use href="#g8" x="101" y="236"/><use href="#g2" x="107" y="236"/><use href="#g2" x="135" y="236"/><use href="#gc" x="141" y="236"/><use href="#g3" x="145" y="236"/><use href="#g3" x="151" y="236"/><use href="#g5" x="157" y="236"/><use href="#g2" x="185" y="236"/><use href="#gc" x="191" y="236"/><use href="#g3" x="195" y="236"/><use href="#g3" x="201" y="236"/><use href="#g8" x="207" y="236"/><use href="#g2" x="235" y="236"/><use href="#gc" x="241" y="236"/><use href="#g5" x="245" y="236"/><use href="#g0" x="251" y="236"/><use href="#g2" x="257" y="236"/><use href="#g2" x="285" y="236"/><use href="#gc" x="291" y="236"/><use href="#g7" x="295" y="236"/><use href="#g6" x="301" y="236"/><use href="#g6" x="307" y="236"/><use href="#g2" x="335" y="236"/><use href="#gc" x="341" y="236"/><use href="#g7" x="345" y="236"/><use href="#g3" x="351" y="236"/><use href="#g4" x="357" y="236"/><use href="#g2" x="385" y="236"/><use href="#gc" x="391" y="236"/><use href="#g6" x="395" y="236"/><use href="#g3" x="401" y="236"/><use href="#g6" x="407" y="236"/><use href="#g2" x="435" y="236"/><use href="#gc" x="441" y="236"/><use href="#g5" x="445" y="236"/><use href="#g3" x="451" y="236"/><use href="#g2" x="457" y="236"/><use href="#g2" x="485" y="236"/><use href="#gc" x="491" y="236"/><use href="#g6" x="495" y="236"/><use href="#g4" x="501" y="236"/><use href="#g6" x="507" y="236"/><use href="#g2" x="535" y="236"/><use href="#gc" x="541" y="236"/><use href="#g5" x="545" y="236"/><use href="#g2" x="551" y="236"/><use href="#g0" x="557" y="236"/><use href="#g2" x="585" y="236"/><use href="#gc" x="591" y="236"/><use href="#g2" x="595" y="236"/><use href="#g9" x="601" y="236"/><use href="#g1" x="607" y="236"/><use href="#g2" x="635" y="236"/><use href="#gc" x="641" y="236"/><use href="#g3" x="645" y="236"/><use href="#g3" x="651" y="236"/><use href="#g1" x="657" y="236"/><use href="#g2" x="685" y="236"/><use href="#gc" x="691" y="236"/><use href="#g6" x="695" y="236"/><use href="#g3" x="701" y="236"/><use href="#g6" x="707" y="236"/><use href="#g2" x="735" y="236"/><use href="#gc" x="741" y="236"/><use href="#g4" x="745" y="236"/><use href="#g8" x="751" y="236"/><use href="#g9" x="757" y="236"/><use href="#g2" x="785" y="236"/><use href="#gc" x="791" y="236"/><use href="#g9" x="795" y="236"/><use href="#g2" x="801" y="236"/><use href="#g1" x="807" y="236"/><use href="#g8" x="840" y="236"/><use href="#gc" x="846" y="236"/><use href="#g6" x="850" y="236"/><use href="#g6" x="856" y="236"/><use href="#g2" x="862" y="236"/><use href="#g2" x="890" y="236"/><use href="#gc" x="896" y="236"/><use href="#g6" x="900" y="236"/><use href="#g7" x="906" y="236"/><use href="#g0" x="912" y="236"/><use href="#g2" x="940" y="236"/><use href="#gc" x="946" y="236"/><use href="#g9" x="950" y="236"/><use href="#g1" x="956" y="236"/><use href="#g0" x="962" y="236"/><use href="#g2" x="11" y="265"/><use href="#g5" x="17" y="265"/><use href="#gs" x="23" y="265"/><use href="#g0" x="29" y="265"/><use href="#g5" x="35" y="265"/><use href="#gs" x="41" y="265"/><use href="#g2" x="47" y="265"/><use href="#g2" x="53" y="265"/><use href="#g2" x="85" y="265"/><use href="#gc" x="91" y="265"/><use href="#g2" x="95" y="265"/><use href="#g8" x="101" y="265"/><use href="#g0" x="107" y="265"/><use href="#g2" x="135" y="265"/><use href="#gc" x="141" y="265"/><use href="#g3" x="145" y="265"/><use href="#g4" x="151" y="265"/><use href="#g1" x="157" y="265"/><use href="#g2" x="185" y="265"/><use href="#gc" x="191" y="265"/><use href="#g3" x="195" y="265"/><use href="#g3" x="201" y="265"/><use href="#g6" x="207" y="265"/><use href="#g2" x="235" y="265"/><use href="#gc" x="241" y="265"/><use href="#g4" x="245" y="265"/><use href="#g9" x="251" y="265"/><use href="#g3" x="257" y="265"/><use href="#g2" x="285" y="265"/><use href="#gc" x="291" y="265"/><use href="#g7" x="295" y="265"/><use href="#g5" x="301" y="265"/><use href="#g5" x="307" y="265"/><use href="#g2" x="335" y="265"/><use href="#gc" x="341" y="265"/><use href="#g7" x="345" y="265"/><use href="#g2" x="351" y="265"/><use href="#g2" x="357" y="265"/><use href="#g2" x="385" y="265"/><use href="#gc" x="391" y="265"/><use href="#g6" x="395" y="265"/><use href="#g3" x="401" y="265"/><use href="#g2" x="407" y="265"/><use href="#g2" x="435" y="265"/><use href="#gc" x="441" y="265"/><use href="#g5" x="445" y="265"/><use href="#g2" x="451" y="265"/><use href="#g5" x="457" y="265"/><use href="#g2" x="485" y="265"/><use href="#gc" x="491" y="265"/><use href="#g6" x="495" y="265"/><use href="#g3" x="501" y="265"/><use href="#g6" x="507" y="265"/><use href="#g2" x="535" y="265"/><use href="#gc" x="541" y="265"/><use href="#g5" x="545" y="265"/><use href="#g2" x="551" y="265"/><use href="#g0" x="557" y="265"/><use href="#g2" x="585" y="265"/><use href="#gc" x="591" y="265"/><use href="#g2" x="595" y="265"/><use href="#g9" x="601" y="265"/><use href="#g3" x="607" y="265"/><use href="#g2" x="635" y="265"/><use href="#gc" x="641" y="265"/><use href="#g3" x="645" y="265"/><use href="#g2" x="651" y="265"/><use href="#g8" x="657" y="265"/><use href="#g2" x="685" y="265"/><use href="#gc" x="691" y="265"/><use href="#g6" x="695" y="265"/><use href="#g2" x="701" y="265"/><use href="#g9" x="707" y="265"/><use href="#g2" x="735" y="265"/><use href="#gc" x="741" y="265"/><use href="#g4" x="745" y="265"/><use href="#g9" x="751" y="265"/><use href="#g0" x="757" y="265"/><use href="#g2" x="785" y="265"/><use href="#gc" x="791" y="265"/><use href="#g9" x="795" y="265"/><use href="#g1" x="801" y="265"/><use href="#g7" x="807" y="265"/><use href="#g8" x="840" y="265"/><use href="#gc" x="846" y="265"/><use href="#g6" x="850" y="265"/><use href="#g5" x="856" y="265"/><use href="#g8" x="862" y="265"/><use href="#g2" x="890" y="265"/><use href="#gc" x="896" y="265"/><use href="#g6" x="900" y="265"/><use href="#g7" x="906" y="265"/><use href="#g0" x="912" y="265"/><use href="#g2" x="940" y="265"/><use href="#gc" x="946" y="265"/><use href="#g9" x="950" y="265"/><use href="#g1" x="956" y="265"/><use href="#g0" x="962" y="265"/><use href="#g2" x="11" y="293"/><use href="#g5" x="17" y="293"/><use href="#gs" x="23" y="293"/><use href="#g0" x="29" y="293"/><use href="#g5" x="35" y="293"/><use href="#gs" x="41" y="293"/><use href="#g2" x="47" y="293"/><use href="#g1" x="53" y="293"/><use href="#g2" x="85" y="293"/><use href="#gc" x="91" y="293"/><use href="#g2" x="95" y="293"/><use href="#g8" x="101" y="293"/><use href="#g1" x="107" y="293"/><use href="#g2" x="135" y="293"/><use href="#gc" x="141" y="293"/><use href="#g3" x="145" y="293"/><use href="#g4" x="151" y="293"/><use href="#g7" x="157" y="293"/><use href="#g2" x="185" y="293"/><use href="#gc" x="191" y="293"/><use href="#g3" x="195" y="293"/><use href="#g4" x="201" y="293"/><use href="#g5" x="207" y="293"/><use href="#g2" x="235" y="293"/><use href="#gc" x="241" y="293"/><use href="#g4" x="245" y="293"/><use href="#g9" x="251" y="293"/><use href="#g8" x="257" y="293"/><use href="#g2" x="285" y="293"/><use href="#gc" x="291" y="293"/><use href="#g7" x="295" y="293"/><use href="#g6" x="301" y="293"/><use href="#g0" x="307" y="293"/><use href="#g2" x="335" y="293"/><use href="#gc" x="341" y="293"/><use href="#g7" x="345" y="293"/><use href="#g2" x="351" y="293"/><use href="#g0" x="357" y="293"/><use href="#g2" x="385" y="293"/><use href="#gc" x="391" y="293"/><use href="#g6" x="395" y="293"/><use href="#g2" x="401" y="293"/><use href="#g9" x="407" y="293"/><use href="#g2" x="435" y="293"/><use href="#gc" x="441" y="293"/><use href="#g4" x="445" y="293"/><use href="#g9" x="451" y="293"/><use href="#g0" x="457" y="293"/><use href="#g2" x="485" y="293"/><use href="#gc" x="491" y="293"/><use href="#g6" x="495" y="293"/><use href="#g4" x="501" y="293"/><use href="#g1" x="507" y="293"/><use href="#g2" x="535" y="293"/><use href="#gc" x="541" y="293"/><use href="#g5" x="545" y="293"/><use href="#g2" x="551" y="293"/><use href="#g0" x="557" y="293"/><use href="#g2" x="585" y="293"/><use href="#gc" x="591" y="293"/><use href="#g3" x="595" y="293"/><use href="#g0" x="601" y="293"/><use href="#g5" x="607" y="293"/><use href="#g2" x="635" y="293"/><use href="#gc" x="641" y="293"/><use href="#g3" x="645" y="293"/><use href="#g4" x="651" y="293"/><use href="#g4" x="657" y="293"/><use href="#g2" x="685" y="293"/><use href="#gc" x="691" y="293"/><use href="#g6" x="695" y="293"/><use href="#g3" x="701" y="293"/><use href="#g4" x="707" y="293"/><use href="#g2" x="735" y="293"/><use href="#gc" x="741" y="293"/><use href="#g4" x="745" y="293"/><use href="#g9" x="751" y="293"/><use href="#g1" x="757" y="293"/><use href="#g2" x="785" y="293"/><use href="#gc" x="791" y="293"/><use href="#g9" x="795" y="293"/><use href="#g2" x="801" y="293"/><use href="#g1" x="807" y="293"/><use href="#g8" x="840" y="293"/><use href="#gc" x="846" y="293"/><use href="#g6" x="850" y="293"/><use href="#g6" x="856" y="293"/><use href="#g9" x="862" y="293"/><use href="#g2" x="890" y="293"/><use href="#gc" x="896" y="293"/><use href="#g6" x="900" y="293"/><use href="#g7" x="906" y="293"/><use href="#g0" x="912" y="293"/><use href="#g2" x="940" y="293"/><use href="#gc" x="946" y="293"/><use href="#g9" x="950" y="293"/><use href="#g1" x="956" y="293"/><use href="#g0" x="962" y="293"/><use href="#g2" x="567" y="362"/><use href="#g5" x="573" y="362"/><use href="#gs" x="579" y="362"/><use href="#g0" x="585" y="362"/><use href="#g5" x="591" y="362"/><use href="#gs" x="597" y="362"/><use href="#g3" x="603" y="362"/><use href="#g0" x="609" y="362"/><use href="#g2" x="683" y="362"/><use href="#gc" x="689" y="362"/><use href="#g4" x="693" y="362"/><use href="#g8" x="699" y="362"/><use href="#g3" x="705" y="362"/><use href="#g2" x="768" y="362"/><use href="#gc" x="774" y="362"/><use href="#g5" x="778" y="362"/><use href="#g2" x="784" y="362"/><use href="#g1" x="790" y="362"/><use href="#g2" x="852" y="362"/><use href="#gc" x="858" y="362"/><use href="#g5" x="862" y="362"/><use href="#g0" x="868" y="362"/><use href="#g0" x="874" y="362"/><use href="#g2" x="567" y="390"/><use href="#g5" x="573" y="390"/><use href="#gs" x="579" y="390"/><use href="#g0" x="585" y="390"/><use href="#g5" x="591" y="390"/><use href="#gs" x="597" y="390"/><use href="#g2" x="603" y="390"/><use href="#g9" x="609" y="390"/><use href="#g2" x="683" y="390"/><use href="#gc" x="689" y="390"/><use href="#g4" x="693" y="390"/><use href="#g6" x="699" y="390"/><use href="#g4" x="705" y="390"/><use href="#g2" x="768" y="390"/><use href="#gc" x="774" y="390"/><use href="#g5" x="778" y="390"/><use href="#g0" x="784" y="390"/><use href="#g0" x="790" y="390"/><use href="#g2" x="852" y="390"/><use href="#gc" x="858" y="390"/><use href="#g4" x="862" y="390"/><use href="#g6" x="868" y="390"/><use href="#g7" x="874" y="390"/><use href="#g2" x="567" y="418"/><use href="#g5" x="573" y="418"/><use href="#gs" x="579" y="418"/><use href="#g0" x="585" y="418"/><use href="#g5" x="591" y="418"/><use href="#gs" x="597" y="418"/><use href="#g2" x="603" y="418"/><use href="#g8" x="609" y="418"/><use href="#g2" x="683" y="418"/><use href="#gc" x="689" y="418"/><use href="#g4" x="693" y="418"/><use href="#g7" x="699" y="418"/><use href="#g2" x="705" y="418"/><use href="#g2" x="768" y="418"/><use href="#gc" x="774" y="418"/><use href="#g4" x="778" y="418"/><use href="#g6" x="784" y="418"/><use href="#g7" x="790" y="418"/><use href="#g2" x="852" y="418"/><use href="#gc" x="858" y="418"/><use href="#g4" x="862" y="418"/><use href="#g7" x="868" y="418"/><use href="#g8" x="874" y="418"/><use href="#g2" x="567" y="446"/><use href="#g5" x="573" y="446"/><use href="#gs" x="579" y="446"/><use href="#g0" x="585" y="446"/><use href="#g5" x="591" y="446"/><use href="#gs" x="597" y="446"/><use href="#g2" x="603" y="446"/><use href="#g7" x="609" y="446"/><use href="#g2" x="683" y="446"/><use href="#gc" x="689" y="446"/><use href="#g4" x="693" y="446"/><use href="#g9" x="699" y="446"/><use href="#g2" x="705" y="446"/><use href="#g2" x="768" y="446"/><use href="#gc" x="774" y="446"/><use href="#g4" x="778" y="446"/><use href="#g7" x="784" y="446"/><use href="#g8" x="790" y="446"/><use href="#g2" x="852" y="446"/><use href="#gc" x="858" y="446"/><use href="#g5" x="862" y="446"/><use href="#g0" x="868" y="446"/><use href="#g4" x="874" y="446"/><use href="#g2" x="567" y="474"/><use href="#g5" x="573" y="474"/><use href="#gs" x="579" y="474"/><use href="#g0" x="585" y="474"/><use href="#g5" x="591" y="474"/><use href="#gs" x="597" y="474"/><use href="#g2" x="603" y="474"/><use href="#g6" x="609" y="474"/><use href="#g2" x="683" y="474"/><use href="#gc" x="689" y="474"/><use href="#g4" x="693" y="474"/><use href="#g8" x="699" y="474"/><use href="#g4" x="705" y="474"/><use href="#g2" x="768" y="474"/><use href="#gc" x="774" y="474"/><use href="#g5" x="778" y="474"/><use href="#g0" x="784" y="474"/><use href="#g4" x="790" y="474"/><use href="#g2" x="852" y="474"/><use href="#gc" x="858" y="474"/><use href="#g5" x="862" y="474"/><use href="#g0" x="868" y="474"/><use href="#g2" x="874" y="474"/><use href="#g2" x="567" y="503"/><use href="#g5" x="573" y="503"/><use href="#gs" x="579" y="503"/><use href="#g0" x="585" y="503"/><use href="#g5" x="591" y="503"/><use href="#gs" x="597" y="503"/><use href="#g2" x="603" y="503"/><use href="#g3" x="609" y="503"/><use href="#g2" x="683" y="503"/><use href="#gc" x="689" y="503"/><use href="#g5" x="693" y="503"/><use href="#g0" x="699" y="503"/><use href="#g1" x="705" y="503"/><use href="#g2" x="768" y="503"/><use href="#gc" x="774" y="503"/><use href="#g5" x="778" y="503"/><use href="#g0" x="784" y="503"/><use href="#g2" x="790" y="503"/><use href="#g2" x="852" y="503"/><use href="#gc" x="858" y="503"/><use href="#g4" x="862" y="503"/><use href="#g9" x="868" y="503"/><use href="#g3" x="874" y="503"/><use href="#g2" x="567" y="531"/><use href="#g5" x="573" y="531"/><use href="#gs" x="579" y="531"/><use href="#g0" x="585" y="531"/><use href="#g5" x="591" y="531"/><use href="#gs" x="597" y="531"/><use href="#g2" x="603" y="531"/><use href="#g2" x="609" y="531"/><use href="#g2" x="683" y="531"/><use href="#gc" x="689" y="531"/><use href="#g5" x="693" y="531"/><use href="#g3" x="699" y="531"/><use href="#g0" x="705" y="531"/><use href="#g2" x="768" y="531"/><use href="#gc" x="774" y="531"/><use href="#g4" x="778" y="531"/><use href="#g9" x="784" y="531"/><use href="#g3" x="790" y="531"/><use href="#g2" x="852" y="531"/><use href="#gc" x="858" y="531"/><use href="#g4" x="862" y="531"/><use href="#g9" x="868" y="531"/><use href="#g8" x="874" y="531"/><use href="#g2" x="567" y="559"/><use href="#g5" x="573" y="559"/><use href="#gs" x="579" y="559"/><use href="#g0" x="585" y="559"/><use href="#g5" x="591" y="559"/><use href="#gs" x="597" y="559"/><use href="#g2" x="603" y="559"/><use href="#g1" x="609" y="559"/><use href="#g2" x="683" y="559"/><use href="#gc" x="689" y="559"/><use href="#g5" x="693" y="559"/><use href="#g0" x="699" y="559"/><use href="#g0" x="705" y="559"/><use href="#g2" x="768" y="559"/><use href="#gc" x="774" y="559"/><use href="#g4" x="778" y="559"/><use href="#g9" x="784" y="559"/><use href="#g8" x="790" y="559"/><use href="#g2" x="852" y="559"/><use href="#gc" x="858" y="559"/><use href="#g4" x="862" y="559"/><use href="#g6" x="868" y="559"/><use href="#g7" x="874" y="559"/><use href="#g2" x="567" y="588"/><use href="#g5" x="573" y="588"/><use href="#gs" x="579" y="588"/><use href="#g0" x="585" y="588"/><use href="#g5" x="591" y="588"/><use href="#gs" x="597" y="588"/><use href="#g2" x="603" y="588"/><use href="#g0" x="609" y="588"/><use href="#g2" x="683" y="588"/><use href="#gc" x="689" y="588"/><use href="#g4" x="693" y="588"/><use href="#g7" x="699" y="588"/><use href="#g6" x="705" y="588"/><use href="#g2" x="768" y="588"/><use href="#gc" x="774" y="588"/><use href="#g4" x="778" y="588"/><use href="#g6" x="784" y="588"/><use href="#g7" x="790" y="588"/><use href="#g2" x="852" y="588"/><use href="#gc" x="858" y="588"/><use href="#g5" x="862" y="588"/><use href="#g0" x="868" y="588"/><use href="#g1" x="874" y="588"/><use href="#g2" x="567" y="616"/><use href="#g5" x="573" y="616"/><use href="#gs" x="579" y="616"/><use href="#g0" x="585" y="616"/><use href="#g5" x="591" y="616"/><use href="#gs" x="597" y="616"/><use href="#g1" x="603" y="616"/><use href="#g9" x="609" y="616"/><use href="#g2" x="683" y="616"/><use href="#gc" x="689" y="616"/><use href="#g4" x="693" y="616"/><use href="#g6" x="699" y="616"/><use href="#g3" x="705" y="616"/><use href="#g2" x="768" y="616"/><use href="#gc" x="774" y="616"/><use href="#g5" x="778" y="616"/><use href="#g0" x="784" y="616"/><use href="#g1" x="790" y="616"/><use href="#g2" x="852" y="616"/><use href="#gc" x="858" y="616"/><use href="#g4" x="862" y="616"/><use href="#g4" x="868" y="616"/><use href="#g5" x="874" y="616"/><use href="#g2" x="567" y="644"/><use href="#g5" x="573" y="644"/><use href="#gs" x="579" y="644"/><use href="#g0" x="585" y="644"/><use href="#g5" x="591" y="644"/><use href="#gs" x="597" y="644"/><use href="#g1" x="603" y="644"/><use href="#g6" x="609" y="644"/><use href="#g2" x="683" y="644"/><use href="#gc" x="689" y="644"/><use href="#g4" x="693" y="644"/><use href="#g4" x="699" y="644"/><use href="#g9" x="705" y="644"/><use href="#g2" x="768" y="644"/><use href="#gc" x="774" y="644"/><use href="#g4" x="778" y="644"/><use href="#g4" x="784" y="644"/><use href="#g5" x="790" y="644"/><use href="#g2" x="852" y="644"/><use href="#gc" x="858" y="644"/><use href="#g4" x="862" y="644"/><use href="#g9" x="868" y="644"/><use href="#g6" x="874" y="644"/><use href="#g3" x="504" y="358"/><use href="#gc" x="510" y="358"/><use href="#g2" x="514" y="358"/><use href="#g0" x="520" y="358"/><use href="#g0" x="526" y="358"/><use href="#g3" x="504" y="385"/><use href="#gc" x="510" y="385"/><use href="#g1" x="514" y="385"/><use href="#g0" x="520" y="385"/><use href="#g0" x="526" y="385"/><use href="#g3" x="504" y="412"/><use href="#gc" x="510" y="412"/><use href="#g0" x="514" y="412"/><use href="#g0" x="520" y="412"/><use href="#g0" x="526" y="412"/><use href="#g2" x="504" y="440"/><use href="#gc" x="510" y="440"/><use href="#g9" x="514" y="440"/><use href="#g0" x="520" y="440"/><use href="#g0" x="526" y="440"/><use href="#g2" x="504" y="467"/><use href="#gc" x="510" y="467"/><use href="#g8" x="514" y="467"/><use href="#g0" x="520" y="467"/><use href="#g0" x="526" y="467"/><use href="#g2" x="504" y="495"/><use href="#gc" x="510" y="495"/><use href="#g7" x="514" y="495"/><use href="#g0" x="520" y="495"/><use href="#g0" x="526" y="495"/><use href="#g2" x="504" y="522"/><use href="#gc" x="510" y="522"/><use href="#g6" x="514" y="522"/><use href="#g0" x="520" y="522"/><use href="#g0" x="526" y="522"/><use href="#g2" x="504" y="549"/><use href="#gc" x="510" y="549"/><use href="#g5" x="514" y="549"/><use href="#g0" x="520" y="549"/><use href="#g0" x="526" y="549"/><use href="#g2" x="504" y="577"/><use href="#gc" x="510" y="577"/><use href="#g4" x="514" y="577"/><use href="#g0" x="520" y="577"/><use href="#g0" x="526" y="577"/><use href="#g2" x="504" y="604"/><use href="#gc" x="510" y="604"/><use href="#g3" x="514" y="604"/><use href="#g0" x="520" y="604"/><use href="#g0" x="526" y="604"/><use href="#g2" x="504" y="631"/><use href="#gc" x="510" y="631"/><use href="#g2" x="514" y="631"/><use href="#g0" x="520" y="631"/><use href="#g0" x="526" y="631"/><use href="#g0" x="14" y="653"/><use href="#g3" x="20" y="653"/><use href="#g0" x="62" y="653"/><use href="#g3" x="68" y="653"/><use href="#gs" x="74" y="653"/><use href="#g1" x="80" y="653"/><use href="#g7" x="86" y="653"/><use href="#g0" x="152" y="653"/><use href="#g4" x="158" y="653"/><use href="#g0" x="184" y="653"/><use href="#g4" x="190" y="653"/><use href="#gs" x="196" y="653"/><use href="#g0" x="202" y="653"/><use href="#g7" x="208" y="653"/><use href="#g0" x="233" y="653"/><use href="#g4" x="239" y="653"/><use href="#gs" x="245" y="653"/><use href="#g1" x="251" y="653"/><use href="#g5" x="257" y="653"/><use href="#g0" x="282" y="653"/><use href="#g4" x="288" y="653"/><use href="#gs" x="294" y="653"/><use href="#g2" x="300" y="653"/><use href="#g3" x="306" y="653"/><use href="#g0" x="331" y="653"/><use href="#g5" x="337" y="653"/><use href="#g0" x="363" y="653"/><use href="#g5" x="369" y="653"/><use href="#gs" x="375" y="653"/><use href="#g1" x="381" y="653"/><use href="#g2" x="387" y="653"/><use href="#g0" x="412" y="653"/><use href="#g5" x="418" y="653"/><use href="#gs" x="424" y="653"/><use href="#g2" x="430" y="653"/><use href="#g0" x="436" y="653"/><use href="#g0" x="488" y="653"/><use href="#g6" x="494" y="653"/><use href="#gs" x="500" y="653"/><use href="#g0" x="506" y="653"/><use href="#g2" x="512" y="653"/></g>
<g fill="#e00000"><use href="#g0" x="940" y="362"/><use href="#gc" x="946" y="362"/><use href="#g0" x="950" y="362"/><use href="#g2" x="956" y="362"/><use href="#g1" x="962" y="362"/><use href="#g0" x="940" y="390"/><use href="#gc" x="946" y="390"/><use href="#g0" x="950" y="390"/><use href="#g3" x="956" y="390"/><use href="#g3" x="962" y="390"/><use href="#g0" x="940" y="474"/><use href="#gc" x="946" y="474"/><use href="#g0" x="950" y="474"/><use href="#g0" x="956" y="474"/><use href="#g2" x="962" y="474"/><use href="#g0" x="940" y="503"/><use href="#gc" x="946" y="503"/><use href="#g0" x="950" y="503"/><use href="#g0" x="956" y="503"/><use href="#g9" x="962" y="503"/><use href="#g0" x="940" y="559"/><use href="#gc" x="946" y="559"/><use href="#g0" x="950" y="559"/><use href="#g3" x="956" y="559"/><use href="#g1" x="962" y="559"/><use href="#g0" x="940" y="616"/><use href="#gc" x="946" y="616"/><use href="#g0" x="950" y="616"/><use href="#g5" x="956" y="616"/><use href="#g6" x="962" y="616"/><use href="#k0" x="90" y="330"/><use href="#k1" x="102" y="330"/><use href="#g3" x="114" y="330"/><use href="#gY" x="120" y="330"/></g>
<g fill="#0000d0"><use href="#gm" x="934" y="418"/><use href="#g0" x="940" y="418"/><use href="#gc" x="946" y="418"/><use href="#g0" x="950" y="418"/><use href="#g1" x="956" y="418"/><use href="#g1" x="962" y="418"/><use href="#gm" x="934" y="446"/><use href="#g0" x="940" y="446"/><use href="#gc" x="946" y="446"/><use href="#g0" x="950" y="446"/><use href="#g2" x="956" y="446"/><use href="#g6" x="962" y="446"/><use href="#gm" x="934" y="531"/><use href="#g0" x="940" y="531"/><use href="#gc" x="946" y="531"/><use href="#g0" x="950" y="531"/><use href="#g0" x="956" y="531"/><use href="#g5" x="962" y="531"/><use href="#gm" x="934" y="588"/><use href="#g0" x="940" y="588"/><use href="#gc" x="946" y="588"/><use href="#g0" x="950" y="588"/><use href="#g3" x="956" y="588"/><use href="#g4" x="962" y="588"/><use href="#gm" x="934" y="644"/><use href="#g0" x="940" y="644"/><use href="#gc" x="946" y="644"/><use href="#g0" x="950" y="644"/><use href="#g5" x="956" y="644"/><use href="#g1" x="962" y="644"/></g>
<g fill="#0000ff"><use href="#k0" x="6" y="330"/><use href="#k1" x="18" y="330"/><use href="#g1" x="30" y="330"/><use href="#gY" x="36" y="330"/><use href="#k0" x="48" y="330"/><use href="#k1" x="60" y="330"/><use href="#g2" x="72" y="330"/><use href="#gY" x="78" y="330"/></g>
<g fill="#8080ff"><use href="#k6" x="132" y="330"/><use href="#k7" x="144" y="330"/><use href="#g3" x="156" y="330"/><use href="#gY" x="162" y="330"/></g>
<g fill="#66cc00"><use href="#k10" x="174" y="330"/><use href="#k11" x="186" y="330"/><use href="#gA" x="198" y="330"/><use href="#gA" x="206" y="330"/><use href="#gm" x="214" y="330"/></g>
</svg>
</body></html>
